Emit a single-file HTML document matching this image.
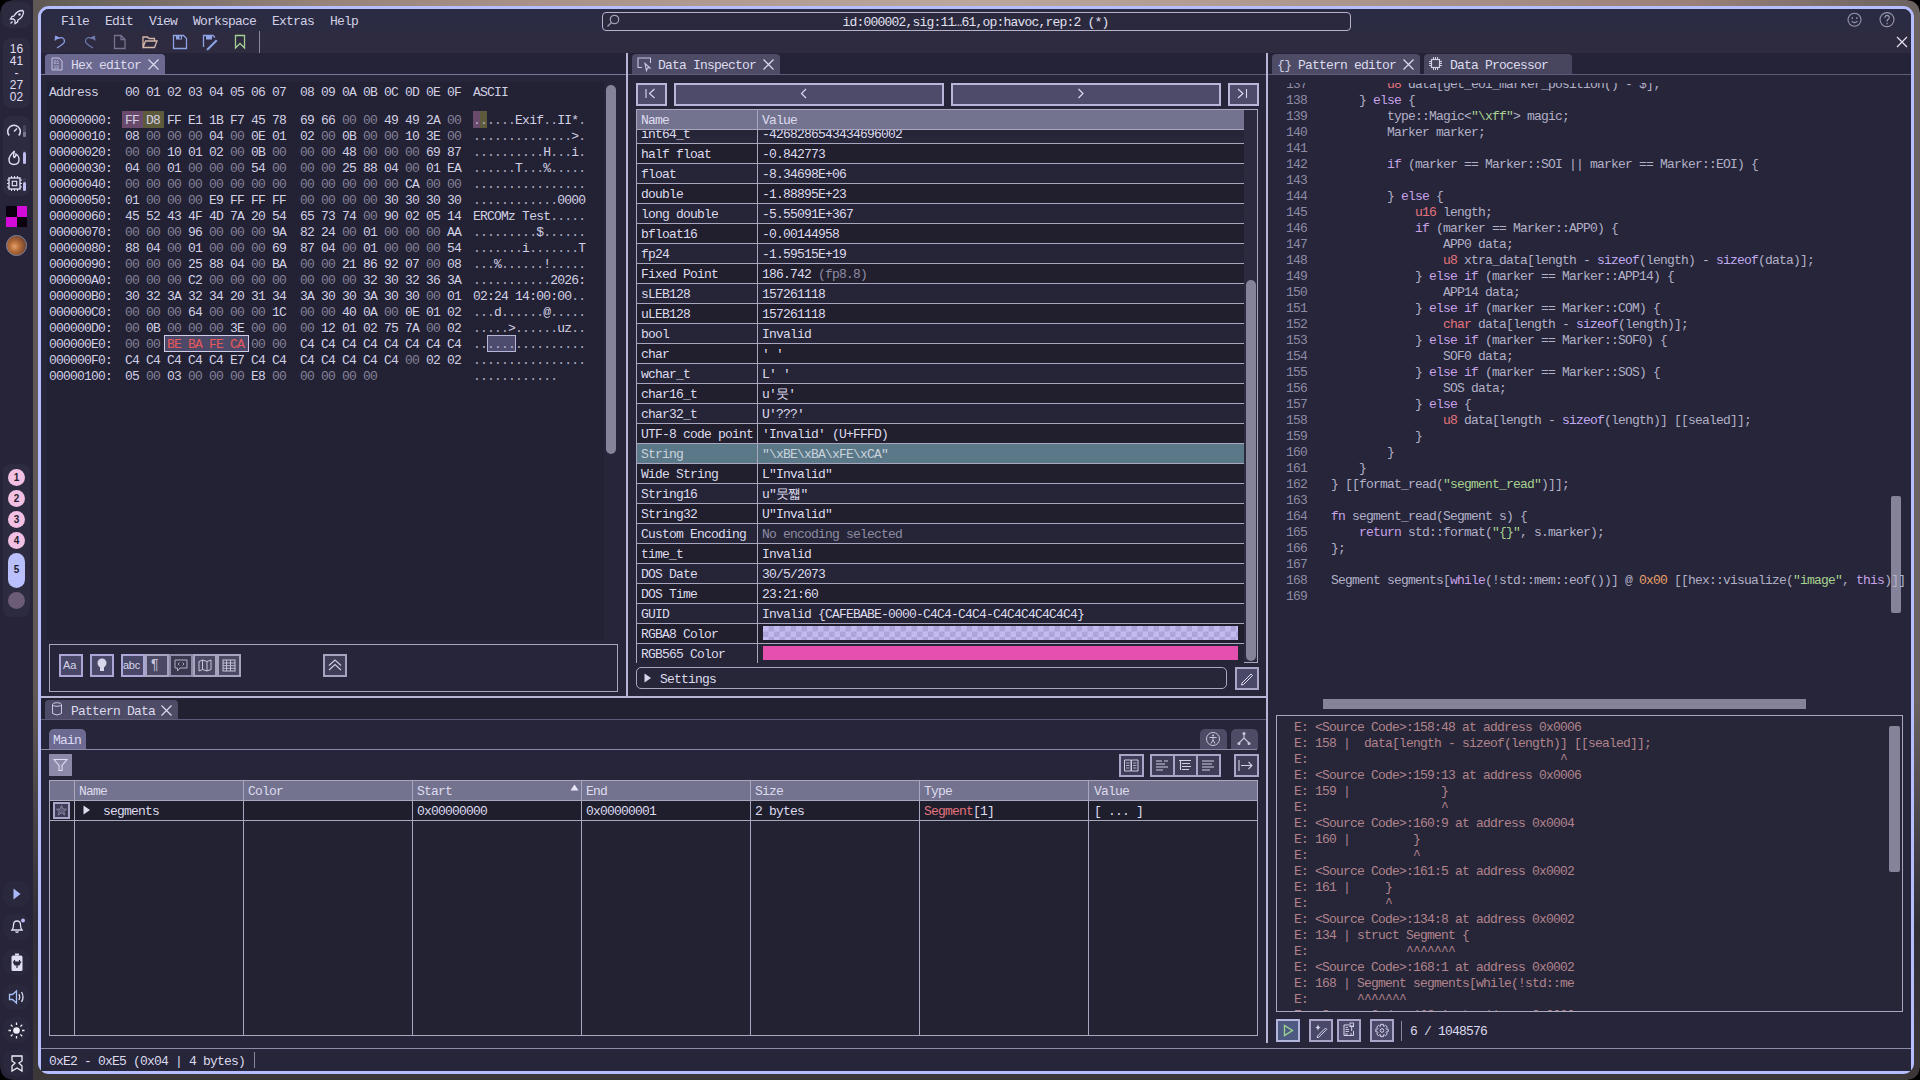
<!DOCTYPE html><html><head><meta charset="utf-8"><style>
*{margin:0;padding:0;box-sizing:border-box}
html,body{width:1920px;height:1080px;overflow:hidden;background:#272438}
body{position:relative;font-family:"Liberation Mono",monospace}
div{position:absolute}
.t{white-space:pre;font-size:13px;line-height:16px;letter-spacing:-0.801px;font-family:"Liberation Mono",monospace}
svg{position:absolute;overflow:visible}
</style></head><body>
<div style="left:26px;top:0;width:1894px;height:1080px;background:linear-gradient(90deg,#5e5652 0%,#6e6660 4%,#958279 15%,#a89088 26%,#bba79e 50%,#a89088 75%,#9a8078 88%,#6a6260 100%)"></div>
<div style="left:26px;top:700px;width:1894px;height:380px;background:linear-gradient(180deg,rgba(40,38,48,0) 0%,#2f2d36 60%,#3c3738 100%)"></div>
<div style="left:0;top:0;width:33px;height:1080px;background:#27243a"></div>
<div style="left:38px;top:6px;width:1876px;height:1068px;border:3px solid #b4befe;border-radius:11px;background:#262539;overflow:hidden" id="win"></div>
<div style="left:41px;top:9px;width:1870px;height:44px;background:linear-gradient(180deg,#2a2b43 0%,#2b2b43 50%,#2e2a40 51%,#2e2a40 100%);border-radius:8px 8px 0 0"></div>
<div style="left:41px;top:53px;width:1870px;height:21px;background:#242337"></div>
<div class="t" style="left:61px;top:14.1px;color:#d2d0e6;">File</div>
<div class="t" style="left:105px;top:14.1px;color:#d2d0e6;">Edit</div>
<div class="t" style="left:149px;top:14.1px;color:#d2d0e6;">View</div>
<div class="t" style="left:193px;top:14.1px;color:#d2d0e6;">Workspace</div>
<div class="t" style="left:272px;top:14.1px;color:#d2d0e6;">Extras</div>
<div class="t" style="left:330px;top:14.1px;color:#d2d0e6;">Help</div>
<div style="left:602px;top:12px;width:749px;height:19px;border:1.5px solid #b5b3ca;border-radius:4px;background:#2a293e"></div>
<svg style="left:606px;top:14px" width="14" height="14"><circle cx="8.5" cy="5.5" r="4.2" fill="none" stroke="#a09eb6" stroke-width="1.3"/><line x1="5.5" y1="8.5" x2="1.5" y2="12.5" stroke="#a09eb6" stroke-width="1.3"/></svg>
<div class="t" style="left:842.5px;top:14.6px;color:#e2e0f0;">id:000002,sig:11…61,op:havoc,rep:2 (*)</div>
<svg style="left:1846px;top:12px" width="18" height="16"><circle cx="8.5" cy="7.8" r="6.5" fill="none" stroke="#9896ad" stroke-width="1.1"/><rect x="5.5" y="5.3" width="1.5" height="1.5" fill="#9896ad"/><rect x="10" y="5.3" width="1.5" height="1.5" fill="#9896ad"/><path d="M5.6 9.2 Q8.5 12 11.4 9.2" fill="none" stroke="#9896ad" stroke-width="1.1"/></svg>
<svg style="left:1879px;top:12px" width="18" height="16"><circle cx="8" cy="7.6" r="7" fill="none" stroke="#9896ad" stroke-width="1.1"/><path d="M5.9 5.8 Q6 3.4 8.2 3.4 Q10.4 3.5 10.3 5.5 Q10.2 7 8.3 8 L8.1 9.6" fill="none" stroke="#9896ad" stroke-width="1.2"/><rect x="7.6" y="11" width="1.2" height="1.2" fill="#9896ad"/></svg>
<svg style="left:1896px;top:36px" width="12" height="12"><path d="M1 1 L11 11 M11 1 L1 11" stroke="#e6e4f4" stroke-width="1.2"/></svg>
<svg style="left:54px;top:35px" width="12" height="14"><path d="M3.5 3.5 Q10.5 1 10.5 6.5 Q10.5 8.5 3 13" fill="none" stroke="#8d9fe6" stroke-width="1.3"/><path d="M1 5.5 L1.5 1 L5.5 3" fill="#8d9fe6" stroke="#8d9fe6" stroke-width="1"/></svg>
<svg style="left:84px;top:35px" width="12" height="14"><path d="M8.5 3.5 Q1.5 1 1.5 6.5 Q1.5 8.5 9 13" fill="none" stroke="#6e79ad" stroke-width="1.3"/><path d="M11 5.5 L10.5 1 L6.5 3" fill="#6e79ad" stroke="#6e79ad" stroke-width="1"/></svg>
<svg style="left:113px;top:34px" width="14" height="16"><path d="M1.5 1.5 H8 L12 5.5 V14.5 H1.5 Z M8 1.5 V5.5 H12" fill="none" stroke="#76728d" stroke-width="1.3"/></svg>
<svg style="left:142px;top:35px" width="16" height="14"><path d="M1 12.5 V2 H5.5 L7 3.5 H12.5 V5.5 M1 12.5 L3.5 6 H15 L12.5 12.5 Z" fill="none" stroke="#d6b9aa" stroke-width="1.3"/></svg>
<svg style="left:172px;top:34px" width="16" height="16"><path d="M1.5 1.5 H11.5 L14.5 4.5 V14.5 H1.5 Z" fill="none" stroke="#8ea3e4" stroke-width="1.3"/><rect x="4" y="1.5" width="6" height="4" fill="#8ea3e4"/><rect x="7.5" y="2.3" width="1.4" height="2.4" fill="#2c2a42"/></svg>
<svg style="left:202px;top:34px" width="16" height="16"><path d="M1.5 13 V1.5 H11 L13 3.5" fill="none" stroke="#8ea3e4" stroke-width="1.3"/><rect x="4" y="1.5" width="6" height="4" fill="#8ea3e4"/><path d="M5 14.5 L14 5.5 L15.5 7 L6.5 16 L4.5 16.5 Z" fill="#8ea3e4"/></svg>
<svg style="left:234px;top:34px" width="12" height="16"><path d="M1.5 1.5 H10.5 V14 L6 9.5 L1.5 14 Z" fill="none" stroke="#a3d095" stroke-width="1.3"/></svg>
<div style="left:259px;top:31px;width:1px;height:22px;background:#8a88a0"></div>
<div style="left:626px;top:53px;width:2px;height:645px;background:#b7b5d6"></div>
<div style="left:1266px;top:53px;width:2px;height:990px;background:#b7b5d6"></div>
<div style="left:41px;top:696px;width:1225px;height:2px;background:#b7b5d6"></div>
<div style="left:41px;top:74px;width:585px;height:1px;background:#77759a"></div>
<div style="left:628px;top:74px;width:638px;height:1px;background:#5d5b78"></div>
<div style="left:1268px;top:74px;width:643px;height:1px;background:#5d5b78"></div>
<div style="left:45px;top:54px;width:120px;height:20px;background:#6b6990;border-radius:4px 4px 0 0"></div>
<svg style="left:51px;top:57px" width="12" height="14"><path d="M1 1 H8 L11 4 V13 H1 Z" fill="none" stroke="#c8c6e0" stroke-width="1"/><text x="2.5" y="6.5" font-size="4.5" fill="#c8c6e0" font-family="Liberation Mono">01</text><text x="2.5" y="11.5" font-size="4.5" fill="#c8c6e0" font-family="Liberation Mono">10</text></svg>
<div class="t" style="left:71px;top:58.1px;color:#dddbee;">Hex editor</div>
<svg style="left:148px;top:59px" width="11" height="11"><path d="M0.5 0.5 L10.5 10.5 M10.5 0.5 L0.5 10.5" stroke="#dcdaee" stroke-width="1.2"/></svg>
<div style="left:632px;top:54px;width:148px;height:20px;background:#4d4b66;border-radius:4px 4px 0 0"></div>
<svg style="left:637px;top:57px" width="15" height="14"><path d="M5 10.5 H1 V1 H13.5 V6" fill="none" stroke="#c8c6e0" stroke-width="1.1"/><path d="M8 6.5 L13 11 L10.5 11 L9.5 13.5 Z" fill="none" stroke="#c8c6e0" stroke-width="1.1"/></svg>
<div class="t" style="left:658px;top:58.1px;color:#dddbee;">Data Inspector</div>
<svg style="left:763px;top:59px" width="11" height="11"><path d="M0.5 0.5 L10.5 10.5 M10.5 0.5 L0.5 10.5" stroke="#dcdaee" stroke-width="1.2"/></svg>
<div style="left:1272px;top:54px;width:148px;height:20px;background:#4d4b66;border-radius:4px 4px 0 0"></div>
<svg style="left:1277px;top:56px" width="14" height="16"></svg>
<div class="t" style="left:1298px;top:58.1px;color:#dddbee;">Pattern editor</div>
<svg style="left:1403px;top:59px" width="11" height="11"><path d="M0.5 0.5 L10.5 10.5 M10.5 0.5 L0.5 10.5" stroke="#dcdaee" stroke-width="1.2"/></svg>
<div class="t" style="left:1277px;top:58.1px;color:#d0cee4;letter-spacing:-0.5px">{}</div>
<div style="left:1424px;top:54px;width:148px;height:20px;background:#48465f;border-radius:4px 4px 0 0"></div>
<svg style="left:1429px;top:57px" width="13" height="13"><rect x="2.5" y="2.5" width="8" height="8" fill="none" stroke="#d0cee4" stroke-width="1.2"/><path d="M4.5 0 V2.5 M6.5 0 V2.5 M8.5 0 V2.5 M4.5 10.5 V13 M6.5 10.5 V13 M8.5 10.5 V13 M0 4.5 H2.5 M0 6.5 H2.5 M0 8.5 H2.5 M10.5 4.5 H13 M10.5 6.5 H13 M10.5 8.5 H13" stroke="#d0cee4" stroke-width="1"/></svg>
<div class="t" style="left:1450px;top:58.1px;color:#dddbee;">Data Processor</div>
<div style="left:41px;top:75px;width:585px;height:621px;background:#262539"></div>
<div style="left:47px;top:82px;width:557px;height:558px;background:#232234"></div>
<div class="t" style="left:49px;top:85.1px;color:#d2d0e4;">Address</div>
<div class="t" style="left:125px;top:85.1px;color:#d2d0e4;">00</div>
<div class="t" style="left:146px;top:85.1px;color:#d2d0e4;">01</div>
<div class="t" style="left:167px;top:85.1px;color:#d2d0e4;">02</div>
<div class="t" style="left:188px;top:85.1px;color:#d2d0e4;">03</div>
<div class="t" style="left:209px;top:85.1px;color:#d2d0e4;">04</div>
<div class="t" style="left:230px;top:85.1px;color:#d2d0e4;">05</div>
<div class="t" style="left:251px;top:85.1px;color:#d2d0e4;">06</div>
<div class="t" style="left:272px;top:85.1px;color:#d2d0e4;">07</div>
<div class="t" style="left:300px;top:85.1px;color:#d2d0e4;">08</div>
<div class="t" style="left:321px;top:85.1px;color:#d2d0e4;">09</div>
<div class="t" style="left:342px;top:85.1px;color:#d2d0e4;">0A</div>
<div class="t" style="left:363px;top:85.1px;color:#d2d0e4;">0B</div>
<div class="t" style="left:384px;top:85.1px;color:#d2d0e4;">0C</div>
<div class="t" style="left:405px;top:85.1px;color:#d2d0e4;">0D</div>
<div class="t" style="left:426px;top:85.1px;color:#d2d0e4;">0E</div>
<div class="t" style="left:447px;top:85.1px;color:#d2d0e4;">0F</div>
<div class="t" style="left:473px;top:85.1px;color:#d2d0e4;">ASCII</div>
<div style="left:122px;top:111px;width:21px;height:17px;background:#6a4a6c"></div>
<div style="left:143px;top:111px;width:21px;height:17px;background:#5e5a3c"></div>
<div style="left:473px;top:111px;width:7px;height:17px;background:#6a4a6c"></div>
<div style="left:480px;top:111px;width:7px;height:17px;background:#5e5a3c"></div>
<div style="left:164px;top:335px;width:85px;height:17px;background:#4b4868;border:1px solid #d2cfea"></div>
<div style="left:487px;top:335px;width:29px;height:17px;background:#4e4c6e;border:1px solid #b8b6d8"></div>
<div class="t" style="left:49px;top:113.1px;color:#d2d0e4;">00000000:</div>
<div class="t" style="left:125px;top:113.1px;color:#d2d0e4;">FF</div>
<div class="t" style="left:146px;top:113.1px;color:#d2d0e4;">D8</div>
<div class="t" style="left:167px;top:113.1px;color:#d2d0e4;">FF</div>
<div class="t" style="left:188px;top:113.1px;color:#d2d0e4;">E1</div>
<div class="t" style="left:209px;top:113.1px;color:#d2d0e4;">1B</div>
<div class="t" style="left:230px;top:113.1px;color:#d2d0e4;">F7</div>
<div class="t" style="left:251px;top:113.1px;color:#d2d0e4;">45</div>
<div class="t" style="left:272px;top:113.1px;color:#d2d0e4;">78</div>
<div class="t" style="left:300px;top:113.1px;color:#d2d0e4;">69</div>
<div class="t" style="left:321px;top:113.1px;color:#d2d0e4;">66</div>
<div class="t" style="left:342px;top:113.1px;color:#858399;">00</div>
<div class="t" style="left:363px;top:113.1px;color:#858399;">00</div>
<div class="t" style="left:384px;top:113.1px;color:#d2d0e4;">49</div>
<div class="t" style="left:405px;top:113.1px;color:#d2d0e4;">49</div>
<div class="t" style="left:426px;top:113.1px;color:#d2d0e4;">2A</div>
<div class="t" style="left:447px;top:113.1px;color:#858399;">00</div>
<div class="t" style="left:473px;top:113.1px;color:#d2d0e4;"><span style="color:#b3b1c6">.</span><span style="color:#b3b1c6">.</span><span style="color:#b3b1c6">.</span><span style="color:#b3b1c6">.</span><span style="color:#b3b1c6">.</span><span style="color:#b3b1c6">.</span><span style="color:#d2d0e4">E</span><span style="color:#d2d0e4">x</span><span style="color:#d2d0e4">i</span><span style="color:#d2d0e4">f</span><span style="color:#b3b1c6">.</span><span style="color:#b3b1c6">.</span><span style="color:#d2d0e4">I</span><span style="color:#d2d0e4">I</span><span style="color:#d2d0e4">*</span><span style="color:#b3b1c6">.</span></div>
<div class="t" style="left:49px;top:129.1px;color:#d2d0e4;">00000010:</div>
<div class="t" style="left:125px;top:129.1px;color:#d2d0e4;">08</div>
<div class="t" style="left:146px;top:129.1px;color:#858399;">00</div>
<div class="t" style="left:167px;top:129.1px;color:#858399;">00</div>
<div class="t" style="left:188px;top:129.1px;color:#858399;">00</div>
<div class="t" style="left:209px;top:129.1px;color:#d2d0e4;">04</div>
<div class="t" style="left:230px;top:129.1px;color:#858399;">00</div>
<div class="t" style="left:251px;top:129.1px;color:#d2d0e4;">0E</div>
<div class="t" style="left:272px;top:129.1px;color:#d2d0e4;">01</div>
<div class="t" style="left:300px;top:129.1px;color:#d2d0e4;">02</div>
<div class="t" style="left:321px;top:129.1px;color:#858399;">00</div>
<div class="t" style="left:342px;top:129.1px;color:#d2d0e4;">0B</div>
<div class="t" style="left:363px;top:129.1px;color:#858399;">00</div>
<div class="t" style="left:384px;top:129.1px;color:#858399;">00</div>
<div class="t" style="left:405px;top:129.1px;color:#d2d0e4;">10</div>
<div class="t" style="left:426px;top:129.1px;color:#d2d0e4;">3E</div>
<div class="t" style="left:447px;top:129.1px;color:#858399;">00</div>
<div class="t" style="left:473px;top:129.1px;color:#d2d0e4;"><span style="color:#b3b1c6">.</span><span style="color:#b3b1c6">.</span><span style="color:#b3b1c6">.</span><span style="color:#b3b1c6">.</span><span style="color:#b3b1c6">.</span><span style="color:#b3b1c6">.</span><span style="color:#b3b1c6">.</span><span style="color:#b3b1c6">.</span><span style="color:#b3b1c6">.</span><span style="color:#b3b1c6">.</span><span style="color:#b3b1c6">.</span><span style="color:#b3b1c6">.</span><span style="color:#b3b1c6">.</span><span style="color:#b3b1c6">.</span><span style="color:#d2d0e4">&gt;</span><span style="color:#b3b1c6">.</span></div>
<div class="t" style="left:49px;top:145.1px;color:#d2d0e4;">00000020:</div>
<div class="t" style="left:125px;top:145.1px;color:#858399;">00</div>
<div class="t" style="left:146px;top:145.1px;color:#858399;">00</div>
<div class="t" style="left:167px;top:145.1px;color:#d2d0e4;">10</div>
<div class="t" style="left:188px;top:145.1px;color:#d2d0e4;">01</div>
<div class="t" style="left:209px;top:145.1px;color:#d2d0e4;">02</div>
<div class="t" style="left:230px;top:145.1px;color:#858399;">00</div>
<div class="t" style="left:251px;top:145.1px;color:#d2d0e4;">0B</div>
<div class="t" style="left:272px;top:145.1px;color:#858399;">00</div>
<div class="t" style="left:300px;top:145.1px;color:#858399;">00</div>
<div class="t" style="left:321px;top:145.1px;color:#858399;">00</div>
<div class="t" style="left:342px;top:145.1px;color:#d2d0e4;">48</div>
<div class="t" style="left:363px;top:145.1px;color:#858399;">00</div>
<div class="t" style="left:384px;top:145.1px;color:#858399;">00</div>
<div class="t" style="left:405px;top:145.1px;color:#858399;">00</div>
<div class="t" style="left:426px;top:145.1px;color:#d2d0e4;">69</div>
<div class="t" style="left:447px;top:145.1px;color:#d2d0e4;">87</div>
<div class="t" style="left:473px;top:145.1px;color:#d2d0e4;"><span style="color:#b3b1c6">.</span><span style="color:#b3b1c6">.</span><span style="color:#b3b1c6">.</span><span style="color:#b3b1c6">.</span><span style="color:#b3b1c6">.</span><span style="color:#b3b1c6">.</span><span style="color:#b3b1c6">.</span><span style="color:#b3b1c6">.</span><span style="color:#b3b1c6">.</span><span style="color:#b3b1c6">.</span><span style="color:#d2d0e4">H</span><span style="color:#b3b1c6">.</span><span style="color:#b3b1c6">.</span><span style="color:#b3b1c6">.</span><span style="color:#d2d0e4">i</span><span style="color:#b3b1c6">.</span></div>
<div class="t" style="left:49px;top:161.1px;color:#d2d0e4;">00000030:</div>
<div class="t" style="left:125px;top:161.1px;color:#d2d0e4;">04</div>
<div class="t" style="left:146px;top:161.1px;color:#858399;">00</div>
<div class="t" style="left:167px;top:161.1px;color:#d2d0e4;">01</div>
<div class="t" style="left:188px;top:161.1px;color:#858399;">00</div>
<div class="t" style="left:209px;top:161.1px;color:#858399;">00</div>
<div class="t" style="left:230px;top:161.1px;color:#858399;">00</div>
<div class="t" style="left:251px;top:161.1px;color:#d2d0e4;">54</div>
<div class="t" style="left:272px;top:161.1px;color:#858399;">00</div>
<div class="t" style="left:300px;top:161.1px;color:#858399;">00</div>
<div class="t" style="left:321px;top:161.1px;color:#858399;">00</div>
<div class="t" style="left:342px;top:161.1px;color:#d2d0e4;">25</div>
<div class="t" style="left:363px;top:161.1px;color:#d2d0e4;">88</div>
<div class="t" style="left:384px;top:161.1px;color:#d2d0e4;">04</div>
<div class="t" style="left:405px;top:161.1px;color:#858399;">00</div>
<div class="t" style="left:426px;top:161.1px;color:#d2d0e4;">01</div>
<div class="t" style="left:447px;top:161.1px;color:#d2d0e4;">EA</div>
<div class="t" style="left:473px;top:161.1px;color:#d2d0e4;"><span style="color:#b3b1c6">.</span><span style="color:#b3b1c6">.</span><span style="color:#b3b1c6">.</span><span style="color:#b3b1c6">.</span><span style="color:#b3b1c6">.</span><span style="color:#b3b1c6">.</span><span style="color:#d2d0e4">T</span><span style="color:#b3b1c6">.</span><span style="color:#b3b1c6">.</span><span style="color:#b3b1c6">.</span><span style="color:#d2d0e4">%</span><span style="color:#b3b1c6">.</span><span style="color:#b3b1c6">.</span><span style="color:#b3b1c6">.</span><span style="color:#b3b1c6">.</span><span style="color:#b3b1c6">.</span></div>
<div class="t" style="left:49px;top:177.1px;color:#d2d0e4;">00000040:</div>
<div class="t" style="left:125px;top:177.1px;color:#858399;">00</div>
<div class="t" style="left:146px;top:177.1px;color:#858399;">00</div>
<div class="t" style="left:167px;top:177.1px;color:#858399;">00</div>
<div class="t" style="left:188px;top:177.1px;color:#858399;">00</div>
<div class="t" style="left:209px;top:177.1px;color:#858399;">00</div>
<div class="t" style="left:230px;top:177.1px;color:#858399;">00</div>
<div class="t" style="left:251px;top:177.1px;color:#858399;">00</div>
<div class="t" style="left:272px;top:177.1px;color:#858399;">00</div>
<div class="t" style="left:300px;top:177.1px;color:#858399;">00</div>
<div class="t" style="left:321px;top:177.1px;color:#858399;">00</div>
<div class="t" style="left:342px;top:177.1px;color:#858399;">00</div>
<div class="t" style="left:363px;top:177.1px;color:#858399;">00</div>
<div class="t" style="left:384px;top:177.1px;color:#858399;">00</div>
<div class="t" style="left:405px;top:177.1px;color:#d2d0e4;">CA</div>
<div class="t" style="left:426px;top:177.1px;color:#858399;">00</div>
<div class="t" style="left:447px;top:177.1px;color:#858399;">00</div>
<div class="t" style="left:473px;top:177.1px;color:#d2d0e4;"><span style="color:#b3b1c6">.</span><span style="color:#b3b1c6">.</span><span style="color:#b3b1c6">.</span><span style="color:#b3b1c6">.</span><span style="color:#b3b1c6">.</span><span style="color:#b3b1c6">.</span><span style="color:#b3b1c6">.</span><span style="color:#b3b1c6">.</span><span style="color:#b3b1c6">.</span><span style="color:#b3b1c6">.</span><span style="color:#b3b1c6">.</span><span style="color:#b3b1c6">.</span><span style="color:#b3b1c6">.</span><span style="color:#b3b1c6">.</span><span style="color:#b3b1c6">.</span><span style="color:#b3b1c6">.</span></div>
<div class="t" style="left:49px;top:193.1px;color:#d2d0e4;">00000050:</div>
<div class="t" style="left:125px;top:193.1px;color:#d2d0e4;">01</div>
<div class="t" style="left:146px;top:193.1px;color:#858399;">00</div>
<div class="t" style="left:167px;top:193.1px;color:#858399;">00</div>
<div class="t" style="left:188px;top:193.1px;color:#858399;">00</div>
<div class="t" style="left:209px;top:193.1px;color:#d2d0e4;">E9</div>
<div class="t" style="left:230px;top:193.1px;color:#d2d0e4;">FF</div>
<div class="t" style="left:251px;top:193.1px;color:#d2d0e4;">FF</div>
<div class="t" style="left:272px;top:193.1px;color:#d2d0e4;">FF</div>
<div class="t" style="left:300px;top:193.1px;color:#858399;">00</div>
<div class="t" style="left:321px;top:193.1px;color:#858399;">00</div>
<div class="t" style="left:342px;top:193.1px;color:#858399;">00</div>
<div class="t" style="left:363px;top:193.1px;color:#858399;">00</div>
<div class="t" style="left:384px;top:193.1px;color:#d2d0e4;">30</div>
<div class="t" style="left:405px;top:193.1px;color:#d2d0e4;">30</div>
<div class="t" style="left:426px;top:193.1px;color:#d2d0e4;">30</div>
<div class="t" style="left:447px;top:193.1px;color:#d2d0e4;">30</div>
<div class="t" style="left:473px;top:193.1px;color:#d2d0e4;"><span style="color:#b3b1c6">.</span><span style="color:#b3b1c6">.</span><span style="color:#b3b1c6">.</span><span style="color:#b3b1c6">.</span><span style="color:#b3b1c6">.</span><span style="color:#b3b1c6">.</span><span style="color:#b3b1c6">.</span><span style="color:#b3b1c6">.</span><span style="color:#b3b1c6">.</span><span style="color:#b3b1c6">.</span><span style="color:#b3b1c6">.</span><span style="color:#b3b1c6">.</span><span style="color:#d2d0e4">0</span><span style="color:#d2d0e4">0</span><span style="color:#d2d0e4">0</span><span style="color:#d2d0e4">0</span></div>
<div class="t" style="left:49px;top:209.1px;color:#d2d0e4;">00000060:</div>
<div class="t" style="left:125px;top:209.1px;color:#d2d0e4;">45</div>
<div class="t" style="left:146px;top:209.1px;color:#d2d0e4;">52</div>
<div class="t" style="left:167px;top:209.1px;color:#d2d0e4;">43</div>
<div class="t" style="left:188px;top:209.1px;color:#d2d0e4;">4F</div>
<div class="t" style="left:209px;top:209.1px;color:#d2d0e4;">4D</div>
<div class="t" style="left:230px;top:209.1px;color:#d2d0e4;">7A</div>
<div class="t" style="left:251px;top:209.1px;color:#d2d0e4;">20</div>
<div class="t" style="left:272px;top:209.1px;color:#d2d0e4;">54</div>
<div class="t" style="left:300px;top:209.1px;color:#d2d0e4;">65</div>
<div class="t" style="left:321px;top:209.1px;color:#d2d0e4;">73</div>
<div class="t" style="left:342px;top:209.1px;color:#d2d0e4;">74</div>
<div class="t" style="left:363px;top:209.1px;color:#858399;">00</div>
<div class="t" style="left:384px;top:209.1px;color:#d2d0e4;">90</div>
<div class="t" style="left:405px;top:209.1px;color:#d2d0e4;">02</div>
<div class="t" style="left:426px;top:209.1px;color:#d2d0e4;">05</div>
<div class="t" style="left:447px;top:209.1px;color:#d2d0e4;">14</div>
<div class="t" style="left:473px;top:209.1px;color:#d2d0e4;"><span style="color:#d2d0e4">E</span><span style="color:#d2d0e4">R</span><span style="color:#d2d0e4">C</span><span style="color:#d2d0e4">O</span><span style="color:#d2d0e4">M</span><span style="color:#d2d0e4">z</span><span style="color:#d2d0e4"> </span><span style="color:#d2d0e4">T</span><span style="color:#d2d0e4">e</span><span style="color:#d2d0e4">s</span><span style="color:#d2d0e4">t</span><span style="color:#b3b1c6">.</span><span style="color:#b3b1c6">.</span><span style="color:#b3b1c6">.</span><span style="color:#b3b1c6">.</span><span style="color:#b3b1c6">.</span></div>
<div class="t" style="left:49px;top:225.1px;color:#d2d0e4;">00000070:</div>
<div class="t" style="left:125px;top:225.1px;color:#858399;">00</div>
<div class="t" style="left:146px;top:225.1px;color:#858399;">00</div>
<div class="t" style="left:167px;top:225.1px;color:#858399;">00</div>
<div class="t" style="left:188px;top:225.1px;color:#d2d0e4;">96</div>
<div class="t" style="left:209px;top:225.1px;color:#858399;">00</div>
<div class="t" style="left:230px;top:225.1px;color:#858399;">00</div>
<div class="t" style="left:251px;top:225.1px;color:#858399;">00</div>
<div class="t" style="left:272px;top:225.1px;color:#d2d0e4;">9A</div>
<div class="t" style="left:300px;top:225.1px;color:#d2d0e4;">82</div>
<div class="t" style="left:321px;top:225.1px;color:#d2d0e4;">24</div>
<div class="t" style="left:342px;top:225.1px;color:#858399;">00</div>
<div class="t" style="left:363px;top:225.1px;color:#d2d0e4;">01</div>
<div class="t" style="left:384px;top:225.1px;color:#858399;">00</div>
<div class="t" style="left:405px;top:225.1px;color:#858399;">00</div>
<div class="t" style="left:426px;top:225.1px;color:#858399;">00</div>
<div class="t" style="left:447px;top:225.1px;color:#d2d0e4;">AA</div>
<div class="t" style="left:473px;top:225.1px;color:#d2d0e4;"><span style="color:#b3b1c6">.</span><span style="color:#b3b1c6">.</span><span style="color:#b3b1c6">.</span><span style="color:#b3b1c6">.</span><span style="color:#b3b1c6">.</span><span style="color:#b3b1c6">.</span><span style="color:#b3b1c6">.</span><span style="color:#b3b1c6">.</span><span style="color:#b3b1c6">.</span><span style="color:#d2d0e4">$</span><span style="color:#b3b1c6">.</span><span style="color:#b3b1c6">.</span><span style="color:#b3b1c6">.</span><span style="color:#b3b1c6">.</span><span style="color:#b3b1c6">.</span><span style="color:#b3b1c6">.</span></div>
<div class="t" style="left:49px;top:241.1px;color:#d2d0e4;">00000080:</div>
<div class="t" style="left:125px;top:241.1px;color:#d2d0e4;">88</div>
<div class="t" style="left:146px;top:241.1px;color:#d2d0e4;">04</div>
<div class="t" style="left:167px;top:241.1px;color:#858399;">00</div>
<div class="t" style="left:188px;top:241.1px;color:#d2d0e4;">01</div>
<div class="t" style="left:209px;top:241.1px;color:#858399;">00</div>
<div class="t" style="left:230px;top:241.1px;color:#858399;">00</div>
<div class="t" style="left:251px;top:241.1px;color:#858399;">00</div>
<div class="t" style="left:272px;top:241.1px;color:#d2d0e4;">69</div>
<div class="t" style="left:300px;top:241.1px;color:#d2d0e4;">87</div>
<div class="t" style="left:321px;top:241.1px;color:#d2d0e4;">04</div>
<div class="t" style="left:342px;top:241.1px;color:#858399;">00</div>
<div class="t" style="left:363px;top:241.1px;color:#d2d0e4;">01</div>
<div class="t" style="left:384px;top:241.1px;color:#858399;">00</div>
<div class="t" style="left:405px;top:241.1px;color:#858399;">00</div>
<div class="t" style="left:426px;top:241.1px;color:#858399;">00</div>
<div class="t" style="left:447px;top:241.1px;color:#d2d0e4;">54</div>
<div class="t" style="left:473px;top:241.1px;color:#d2d0e4;"><span style="color:#b3b1c6">.</span><span style="color:#b3b1c6">.</span><span style="color:#b3b1c6">.</span><span style="color:#b3b1c6">.</span><span style="color:#b3b1c6">.</span><span style="color:#b3b1c6">.</span><span style="color:#b3b1c6">.</span><span style="color:#d2d0e4">i</span><span style="color:#b3b1c6">.</span><span style="color:#b3b1c6">.</span><span style="color:#b3b1c6">.</span><span style="color:#b3b1c6">.</span><span style="color:#b3b1c6">.</span><span style="color:#b3b1c6">.</span><span style="color:#b3b1c6">.</span><span style="color:#d2d0e4">T</span></div>
<div class="t" style="left:49px;top:257.1px;color:#d2d0e4;">00000090:</div>
<div class="t" style="left:125px;top:257.1px;color:#858399;">00</div>
<div class="t" style="left:146px;top:257.1px;color:#858399;">00</div>
<div class="t" style="left:167px;top:257.1px;color:#858399;">00</div>
<div class="t" style="left:188px;top:257.1px;color:#d2d0e4;">25</div>
<div class="t" style="left:209px;top:257.1px;color:#d2d0e4;">88</div>
<div class="t" style="left:230px;top:257.1px;color:#d2d0e4;">04</div>
<div class="t" style="left:251px;top:257.1px;color:#858399;">00</div>
<div class="t" style="left:272px;top:257.1px;color:#d2d0e4;">BA</div>
<div class="t" style="left:300px;top:257.1px;color:#858399;">00</div>
<div class="t" style="left:321px;top:257.1px;color:#858399;">00</div>
<div class="t" style="left:342px;top:257.1px;color:#d2d0e4;">21</div>
<div class="t" style="left:363px;top:257.1px;color:#d2d0e4;">86</div>
<div class="t" style="left:384px;top:257.1px;color:#d2d0e4;">92</div>
<div class="t" style="left:405px;top:257.1px;color:#d2d0e4;">07</div>
<div class="t" style="left:426px;top:257.1px;color:#858399;">00</div>
<div class="t" style="left:447px;top:257.1px;color:#d2d0e4;">08</div>
<div class="t" style="left:473px;top:257.1px;color:#d2d0e4;"><span style="color:#b3b1c6">.</span><span style="color:#b3b1c6">.</span><span style="color:#b3b1c6">.</span><span style="color:#d2d0e4">%</span><span style="color:#b3b1c6">.</span><span style="color:#b3b1c6">.</span><span style="color:#b3b1c6">.</span><span style="color:#b3b1c6">.</span><span style="color:#b3b1c6">.</span><span style="color:#b3b1c6">.</span><span style="color:#d2d0e4">!</span><span style="color:#b3b1c6">.</span><span style="color:#b3b1c6">.</span><span style="color:#b3b1c6">.</span><span style="color:#b3b1c6">.</span><span style="color:#b3b1c6">.</span></div>
<div class="t" style="left:49px;top:273.1px;color:#d2d0e4;">000000A0:</div>
<div class="t" style="left:125px;top:273.1px;color:#858399;">00</div>
<div class="t" style="left:146px;top:273.1px;color:#858399;">00</div>
<div class="t" style="left:167px;top:273.1px;color:#858399;">00</div>
<div class="t" style="left:188px;top:273.1px;color:#d2d0e4;">C2</div>
<div class="t" style="left:209px;top:273.1px;color:#858399;">00</div>
<div class="t" style="left:230px;top:273.1px;color:#858399;">00</div>
<div class="t" style="left:251px;top:273.1px;color:#858399;">00</div>
<div class="t" style="left:272px;top:273.1px;color:#858399;">00</div>
<div class="t" style="left:300px;top:273.1px;color:#858399;">00</div>
<div class="t" style="left:321px;top:273.1px;color:#858399;">00</div>
<div class="t" style="left:342px;top:273.1px;color:#858399;">00</div>
<div class="t" style="left:363px;top:273.1px;color:#d2d0e4;">32</div>
<div class="t" style="left:384px;top:273.1px;color:#d2d0e4;">30</div>
<div class="t" style="left:405px;top:273.1px;color:#d2d0e4;">32</div>
<div class="t" style="left:426px;top:273.1px;color:#d2d0e4;">36</div>
<div class="t" style="left:447px;top:273.1px;color:#d2d0e4;">3A</div>
<div class="t" style="left:473px;top:273.1px;color:#d2d0e4;"><span style="color:#b3b1c6">.</span><span style="color:#b3b1c6">.</span><span style="color:#b3b1c6">.</span><span style="color:#b3b1c6">.</span><span style="color:#b3b1c6">.</span><span style="color:#b3b1c6">.</span><span style="color:#b3b1c6">.</span><span style="color:#b3b1c6">.</span><span style="color:#b3b1c6">.</span><span style="color:#b3b1c6">.</span><span style="color:#b3b1c6">.</span><span style="color:#d2d0e4">2</span><span style="color:#d2d0e4">0</span><span style="color:#d2d0e4">2</span><span style="color:#d2d0e4">6</span><span style="color:#d2d0e4">:</span></div>
<div class="t" style="left:49px;top:289.1px;color:#d2d0e4;">000000B0:</div>
<div class="t" style="left:125px;top:289.1px;color:#d2d0e4;">30</div>
<div class="t" style="left:146px;top:289.1px;color:#d2d0e4;">32</div>
<div class="t" style="left:167px;top:289.1px;color:#d2d0e4;">3A</div>
<div class="t" style="left:188px;top:289.1px;color:#d2d0e4;">32</div>
<div class="t" style="left:209px;top:289.1px;color:#d2d0e4;">34</div>
<div class="t" style="left:230px;top:289.1px;color:#d2d0e4;">20</div>
<div class="t" style="left:251px;top:289.1px;color:#d2d0e4;">31</div>
<div class="t" style="left:272px;top:289.1px;color:#d2d0e4;">34</div>
<div class="t" style="left:300px;top:289.1px;color:#d2d0e4;">3A</div>
<div class="t" style="left:321px;top:289.1px;color:#d2d0e4;">30</div>
<div class="t" style="left:342px;top:289.1px;color:#d2d0e4;">30</div>
<div class="t" style="left:363px;top:289.1px;color:#d2d0e4;">3A</div>
<div class="t" style="left:384px;top:289.1px;color:#d2d0e4;">30</div>
<div class="t" style="left:405px;top:289.1px;color:#d2d0e4;">30</div>
<div class="t" style="left:426px;top:289.1px;color:#858399;">00</div>
<div class="t" style="left:447px;top:289.1px;color:#d2d0e4;">01</div>
<div class="t" style="left:473px;top:289.1px;color:#d2d0e4;"><span style="color:#d2d0e4">0</span><span style="color:#d2d0e4">2</span><span style="color:#d2d0e4">:</span><span style="color:#d2d0e4">2</span><span style="color:#d2d0e4">4</span><span style="color:#d2d0e4"> </span><span style="color:#d2d0e4">1</span><span style="color:#d2d0e4">4</span><span style="color:#d2d0e4">:</span><span style="color:#d2d0e4">0</span><span style="color:#d2d0e4">0</span><span style="color:#d2d0e4">:</span><span style="color:#d2d0e4">0</span><span style="color:#d2d0e4">0</span><span style="color:#b3b1c6">.</span><span style="color:#b3b1c6">.</span></div>
<div class="t" style="left:49px;top:305.1px;color:#d2d0e4;">000000C0:</div>
<div class="t" style="left:125px;top:305.1px;color:#858399;">00</div>
<div class="t" style="left:146px;top:305.1px;color:#858399;">00</div>
<div class="t" style="left:167px;top:305.1px;color:#858399;">00</div>
<div class="t" style="left:188px;top:305.1px;color:#d2d0e4;">64</div>
<div class="t" style="left:209px;top:305.1px;color:#858399;">00</div>
<div class="t" style="left:230px;top:305.1px;color:#858399;">00</div>
<div class="t" style="left:251px;top:305.1px;color:#858399;">00</div>
<div class="t" style="left:272px;top:305.1px;color:#d2d0e4;">1C</div>
<div class="t" style="left:300px;top:305.1px;color:#858399;">00</div>
<div class="t" style="left:321px;top:305.1px;color:#858399;">00</div>
<div class="t" style="left:342px;top:305.1px;color:#d2d0e4;">40</div>
<div class="t" style="left:363px;top:305.1px;color:#d2d0e4;">0A</div>
<div class="t" style="left:384px;top:305.1px;color:#858399;">00</div>
<div class="t" style="left:405px;top:305.1px;color:#d2d0e4;">0E</div>
<div class="t" style="left:426px;top:305.1px;color:#d2d0e4;">01</div>
<div class="t" style="left:447px;top:305.1px;color:#d2d0e4;">02</div>
<div class="t" style="left:473px;top:305.1px;color:#d2d0e4;"><span style="color:#b3b1c6">.</span><span style="color:#b3b1c6">.</span><span style="color:#b3b1c6">.</span><span style="color:#d2d0e4">d</span><span style="color:#b3b1c6">.</span><span style="color:#b3b1c6">.</span><span style="color:#b3b1c6">.</span><span style="color:#b3b1c6">.</span><span style="color:#b3b1c6">.</span><span style="color:#b3b1c6">.</span><span style="color:#d2d0e4">@</span><span style="color:#b3b1c6">.</span><span style="color:#b3b1c6">.</span><span style="color:#b3b1c6">.</span><span style="color:#b3b1c6">.</span><span style="color:#b3b1c6">.</span></div>
<div class="t" style="left:49px;top:321.1px;color:#d2d0e4;">000000D0:</div>
<div class="t" style="left:125px;top:321.1px;color:#858399;">00</div>
<div class="t" style="left:146px;top:321.1px;color:#d2d0e4;">0B</div>
<div class="t" style="left:167px;top:321.1px;color:#858399;">00</div>
<div class="t" style="left:188px;top:321.1px;color:#858399;">00</div>
<div class="t" style="left:209px;top:321.1px;color:#858399;">00</div>
<div class="t" style="left:230px;top:321.1px;color:#d2d0e4;">3E</div>
<div class="t" style="left:251px;top:321.1px;color:#858399;">00</div>
<div class="t" style="left:272px;top:321.1px;color:#858399;">00</div>
<div class="t" style="left:300px;top:321.1px;color:#858399;">00</div>
<div class="t" style="left:321px;top:321.1px;color:#d2d0e4;">12</div>
<div class="t" style="left:342px;top:321.1px;color:#d2d0e4;">01</div>
<div class="t" style="left:363px;top:321.1px;color:#d2d0e4;">02</div>
<div class="t" style="left:384px;top:321.1px;color:#d2d0e4;">75</div>
<div class="t" style="left:405px;top:321.1px;color:#d2d0e4;">7A</div>
<div class="t" style="left:426px;top:321.1px;color:#858399;">00</div>
<div class="t" style="left:447px;top:321.1px;color:#d2d0e4;">02</div>
<div class="t" style="left:473px;top:321.1px;color:#d2d0e4;"><span style="color:#b3b1c6">.</span><span style="color:#b3b1c6">.</span><span style="color:#b3b1c6">.</span><span style="color:#b3b1c6">.</span><span style="color:#b3b1c6">.</span><span style="color:#d2d0e4">&gt;</span><span style="color:#b3b1c6">.</span><span style="color:#b3b1c6">.</span><span style="color:#b3b1c6">.</span><span style="color:#b3b1c6">.</span><span style="color:#b3b1c6">.</span><span style="color:#b3b1c6">.</span><span style="color:#d2d0e4">u</span><span style="color:#d2d0e4">z</span><span style="color:#b3b1c6">.</span><span style="color:#b3b1c6">.</span></div>
<div class="t" style="left:49px;top:337.1px;color:#d2d0e4;">000000E0:</div>
<div class="t" style="left:125px;top:337.1px;color:#858399;">00</div>
<div class="t" style="left:146px;top:337.1px;color:#858399;">00</div>
<div class="t" style="left:167px;top:337.1px;color:#e8585a;">BE</div>
<div class="t" style="left:188px;top:337.1px;color:#e8585a;">BA</div>
<div class="t" style="left:209px;top:337.1px;color:#e8585a;">FE</div>
<div class="t" style="left:230px;top:337.1px;color:#e8585a;">CA</div>
<div class="t" style="left:251px;top:337.1px;color:#858399;">00</div>
<div class="t" style="left:272px;top:337.1px;color:#858399;">00</div>
<div class="t" style="left:300px;top:337.1px;color:#d2d0e4;">C4</div>
<div class="t" style="left:321px;top:337.1px;color:#d2d0e4;">C4</div>
<div class="t" style="left:342px;top:337.1px;color:#d2d0e4;">C4</div>
<div class="t" style="left:363px;top:337.1px;color:#d2d0e4;">C4</div>
<div class="t" style="left:384px;top:337.1px;color:#d2d0e4;">C4</div>
<div class="t" style="left:405px;top:337.1px;color:#d2d0e4;">C4</div>
<div class="t" style="left:426px;top:337.1px;color:#d2d0e4;">C4</div>
<div class="t" style="left:447px;top:337.1px;color:#d2d0e4;">C4</div>
<div class="t" style="left:473px;top:337.1px;color:#d2d0e4;"><span style="color:#b3b1c6">.</span><span style="color:#b3b1c6">.</span><span style="color:#b3b1c6">.</span><span style="color:#b3b1c6">.</span><span style="color:#b3b1c6">.</span><span style="color:#b3b1c6">.</span><span style="color:#b3b1c6">.</span><span style="color:#b3b1c6">.</span><span style="color:#b3b1c6">.</span><span style="color:#b3b1c6">.</span><span style="color:#b3b1c6">.</span><span style="color:#b3b1c6">.</span><span style="color:#b3b1c6">.</span><span style="color:#b3b1c6">.</span><span style="color:#b3b1c6">.</span><span style="color:#b3b1c6">.</span></div>
<div class="t" style="left:49px;top:353.1px;color:#d2d0e4;">000000F0:</div>
<div class="t" style="left:125px;top:353.1px;color:#d2d0e4;">C4</div>
<div class="t" style="left:146px;top:353.1px;color:#d2d0e4;">C4</div>
<div class="t" style="left:167px;top:353.1px;color:#d2d0e4;">C4</div>
<div class="t" style="left:188px;top:353.1px;color:#d2d0e4;">C4</div>
<div class="t" style="left:209px;top:353.1px;color:#d2d0e4;">C4</div>
<div class="t" style="left:230px;top:353.1px;color:#d2d0e4;">E7</div>
<div class="t" style="left:251px;top:353.1px;color:#d2d0e4;">C4</div>
<div class="t" style="left:272px;top:353.1px;color:#d2d0e4;">C4</div>
<div class="t" style="left:300px;top:353.1px;color:#d2d0e4;">C4</div>
<div class="t" style="left:321px;top:353.1px;color:#d2d0e4;">C4</div>
<div class="t" style="left:342px;top:353.1px;color:#d2d0e4;">C4</div>
<div class="t" style="left:363px;top:353.1px;color:#d2d0e4;">C4</div>
<div class="t" style="left:384px;top:353.1px;color:#d2d0e4;">C4</div>
<div class="t" style="left:405px;top:353.1px;color:#858399;">00</div>
<div class="t" style="left:426px;top:353.1px;color:#d2d0e4;">02</div>
<div class="t" style="left:447px;top:353.1px;color:#d2d0e4;">02</div>
<div class="t" style="left:473px;top:353.1px;color:#d2d0e4;"><span style="color:#b3b1c6">.</span><span style="color:#b3b1c6">.</span><span style="color:#b3b1c6">.</span><span style="color:#b3b1c6">.</span><span style="color:#b3b1c6">.</span><span style="color:#b3b1c6">.</span><span style="color:#b3b1c6">.</span><span style="color:#b3b1c6">.</span><span style="color:#b3b1c6">.</span><span style="color:#b3b1c6">.</span><span style="color:#b3b1c6">.</span><span style="color:#b3b1c6">.</span><span style="color:#b3b1c6">.</span><span style="color:#b3b1c6">.</span><span style="color:#b3b1c6">.</span><span style="color:#b3b1c6">.</span></div>
<div class="t" style="left:49px;top:369.1px;color:#d2d0e4;">00000100:</div>
<div class="t" style="left:125px;top:369.1px;color:#d2d0e4;">05</div>
<div class="t" style="left:146px;top:369.1px;color:#858399;">00</div>
<div class="t" style="left:167px;top:369.1px;color:#d2d0e4;">03</div>
<div class="t" style="left:188px;top:369.1px;color:#858399;">00</div>
<div class="t" style="left:209px;top:369.1px;color:#858399;">00</div>
<div class="t" style="left:230px;top:369.1px;color:#858399;">00</div>
<div class="t" style="left:251px;top:369.1px;color:#d2d0e4;">E8</div>
<div class="t" style="left:272px;top:369.1px;color:#858399;">00</div>
<div class="t" style="left:300px;top:369.1px;color:#858399;">00</div>
<div class="t" style="left:321px;top:369.1px;color:#858399;">00</div>
<div class="t" style="left:342px;top:369.1px;color:#858399;">00</div>
<div class="t" style="left:363px;top:369.1px;color:#858399;">00</div>
<div class="t" style="left:473px;top:369.1px;color:#d2d0e4;"><span style="color:#b3b1c6">.</span><span style="color:#b3b1c6">.</span><span style="color:#b3b1c6">.</span><span style="color:#b3b1c6">.</span><span style="color:#b3b1c6">.</span><span style="color:#b3b1c6">.</span><span style="color:#b3b1c6">.</span><span style="color:#b3b1c6">.</span><span style="color:#b3b1c6">.</span><span style="color:#b3b1c6">.</span><span style="color:#b3b1c6">.</span><span style="color:#b3b1c6">.</span></div>
<div style="left:606px;top:85px;width:10px;height:369px;background:#858399;border-radius:5px"></div>
<div style="left:49px;top:644px;width:569px;height:48px;border:1px solid #a9a7bf"></div>
<div style="left:59px;top:654px;width:24px;height:23px;background:#4a4868;border:2px solid #aaa6d6"></div>
<div class="t" style="left:63px;top:657px;color:#d8d6ea;font-family:'Liberation Sans', sans-serif;font-size:11px;letter-spacing:0">Aa</div>
<div style="left:90px;top:654px;width:24px;height:23px;background:#4a4868;border:2px solid #aaa6d6"></div>
<svg style="left:95px;top:657px" width="14" height="17"><circle cx="7" cy="6" r="4.5" fill="#d8d6ea"/><rect x="5" y="10" width="4" height="4" fill="#d8d6ea"/></svg>
<div style="left:121px;top:654px;width:24px;height:23px;background:#4a4868;border:2px solid #aaa6d6"></div>
<div class="t" style="left:123px;top:657px;color:#d8d6ea;font-family:'Liberation Sans', sans-serif;font-size:11px;letter-spacing:-0.3px">abc</div>
<div style="left:145px;top:654px;width:24px;height:23px;background:#4a4863;border:2px solid #a6a3bf"></div>
<div class="t" style="left:151px;top:656px;color:#c8c6dc;font-family:'Liberation Sans', sans-serif;font-size:14px;letter-spacing:0">¶</div>
<div style="left:169px;top:654px;width:24px;height:23px;background:#3a3850;border:2px solid #8e8aa8"></div>
<svg style="left:174px;top:659px" width="14" height="13"><path d="M1 1 H13 V9 H6 L3.5 12 V9 H1 Z" fill="none" stroke="#b0aec4" stroke-width="1"/><path d="M5.5 3.5 L4 5 L5.5 6.5 M8.5 3.5 L10 5 L8.5 6.5" fill="none" stroke="#b0aec4" stroke-width="0.9"/></svg>
<div style="left:193px;top:654px;width:24px;height:23px;background:#4a4863;border:2px solid #a6a3bf"></div>
<svg style="left:198px;top:659px" width="14" height="13"><path d="M1 2.5 L4.5 1 L9 2.5 L13 1 V10.5 L9 12 L4.5 10.5 L1 12 Z M4.5 1 V10.5 M9 2.5 V12" fill="none" stroke="#c8c6dc" stroke-width="1"/></svg>
<div style="left:217px;top:654px;width:24px;height:23px;background:#4a4863;border:2px solid #a6a3bf"></div>
<svg style="left:222px;top:659px" width="14" height="13"><rect x="1" y="1" width="12" height="11" fill="none" stroke="#c8c6dc" stroke-width="1"/><path d="M1 4 H13 M1 6.7 H13 M1 9.3 H13 M4.5 1 V12 M8.5 1 V12" stroke="#c8c6dc" stroke-width="0.9"/></svg>
<div style="left:323px;top:654px;width:24px;height:23px;background:#3f3d57;border:2px solid #a6a3bf"></div>
<svg style="left:327px;top:657px" width="16" height="16"><path d="M2 8.5 L8 3 L14 8.5 M2 13 L8 7.5 L14 13" fill="none" stroke="#d0cee4" stroke-width="1.1"/></svg>
<div style="left:628px;top:75px;width:638px;height:621px;background:#262539"></div>
<div style="left:636px;top:83px;width:31px;height:23px;background:#4e4b6a;border:2px solid #b9b6d9"></div>
<svg style="left:644px;top:87px" width="16" height="14"><path d="M2 2 V11 M10.5 2 L5.5 6.5 L10.5 11" fill="none" stroke="#dcdaf0" stroke-width="1.1"/></svg>
<div style="left:674px;top:83px;width:270px;height:23px;background:#4e4b6a;border:2px solid #b9b6d9"></div>
<svg style="left:799px;top:87px" width="10" height="14"><path d="M7 2 L2.5 6.5 L7 11" fill="none" stroke="#dcdaf0" stroke-width="1.2"/></svg>
<div style="left:951px;top:83px;width:270px;height:23px;background:#4e4b6a;border:2px solid #b9b6d9"></div>
<svg style="left:1076px;top:87px" width="10" height="14"><path d="M2.5 2 L7 6.5 L2.5 11" fill="none" stroke="#dcdaf0" stroke-width="1.2"/></svg>
<div style="left:1228px;top:83px;width:31px;height:23px;background:#4e4b6a;border:2px solid #b9b6d9"></div>
<svg style="left:1235px;top:87px" width="16" height="14"><path d="M3 2 L8 6.5 L3 11 M11.5 2 V11" fill="none" stroke="#dcdaf0" stroke-width="1.1"/></svg>
<div style="left:636px;top:109px;width:622px;height:554px;border:1px solid #a9a7bf;background:#282739"></div>
<div style="left:637px;top:110px;width:607px;height:19px;background:#74738f"></div>
<div style="left:1244px;top:110px;width:13px;height:552px;background:#2b2a3e"></div>
<div style="left:1246px;top:280px;width:10px;height:381px;background:#858399;border-radius:5px"></div>
<div class="t" style="left:641px;top:113.1px;color:#dddbee;">Name</div>
<div class="t" style="left:762px;top:113.1px;color:#dddbee;">Value</div>
<div style="left:757px;top:110px;width:1px;height:553px;background:#a9a7bf"></div>
<div style="left:637px;top:129px;width:607px;height:1px;background:#a9a7bf"></div>
<div style="left:637px;top:130px;width:607px;height:533px;overflow:hidden">
<div style="left:0;top:-7px;width:607px;height:13px;background:#262537"></div>
<div class="t" style="left:4px;top:-2.9px;color:#dddbee">int64_t</div>
<div class="t" style="left:125px;top:-2.9px;color:#dddbee">-4268286543434696002</div>
<div style="left:0;top:14px;width:607px;height:19px;background:#211f2d"></div>
<div style="left:0;top:13px;width:607px;height:1px;background:#a9a7bf"></div>
<div class="t" style="left:4px;top:17.1px;color:#dddbee">half float</div>
<div class="t" style="left:125px;top:17.1px;color:#dddbee">-0.842773</div>
<div style="left:0;top:34px;width:607px;height:19px;background:#262537"></div>
<div style="left:0;top:33px;width:607px;height:1px;background:#a9a7bf"></div>
<div class="t" style="left:4px;top:37.1px;color:#dddbee">float</div>
<div class="t" style="left:125px;top:37.1px;color:#dddbee">-8.34698E+06</div>
<div style="left:0;top:54px;width:607px;height:19px;background:#211f2d"></div>
<div style="left:0;top:53px;width:607px;height:1px;background:#a9a7bf"></div>
<div class="t" style="left:4px;top:57.1px;color:#dddbee">double</div>
<div class="t" style="left:125px;top:57.1px;color:#dddbee">-1.88895E+23</div>
<div style="left:0;top:74px;width:607px;height:19px;background:#262537"></div>
<div style="left:0;top:73px;width:607px;height:1px;background:#a9a7bf"></div>
<div class="t" style="left:4px;top:77.1px;color:#dddbee">long double</div>
<div class="t" style="left:125px;top:77.1px;color:#dddbee">-5.55091E+367</div>
<div style="left:0;top:94px;width:607px;height:19px;background:#211f2d"></div>
<div style="left:0;top:93px;width:607px;height:1px;background:#a9a7bf"></div>
<div class="t" style="left:4px;top:97.1px;color:#dddbee">bfloat16</div>
<div class="t" style="left:125px;top:97.1px;color:#dddbee">-0.00144958</div>
<div style="left:0;top:114px;width:607px;height:19px;background:#262537"></div>
<div style="left:0;top:113px;width:607px;height:1px;background:#a9a7bf"></div>
<div class="t" style="left:4px;top:117.1px;color:#dddbee">fp24</div>
<div class="t" style="left:125px;top:117.1px;color:#dddbee">-1.59515E+19</div>
<div style="left:0;top:134px;width:607px;height:19px;background:#211f2d"></div>
<div style="left:0;top:133px;width:607px;height:1px;background:#a9a7bf"></div>
<div class="t" style="left:4px;top:137.1px;color:#dddbee">Fixed Point</div>
<div class="t" style="left:125px;top:137.1px;color:#dddbee">186.742 <span style="color:#8d8ba3">(fp8.8)</span></div>
<div style="left:0;top:154px;width:607px;height:19px;background:#262537"></div>
<div style="left:0;top:153px;width:607px;height:1px;background:#a9a7bf"></div>
<div class="t" style="left:4px;top:157.1px;color:#dddbee">sLEB128</div>
<div class="t" style="left:125px;top:157.1px;color:#dddbee">157261118</div>
<div style="left:0;top:174px;width:607px;height:19px;background:#211f2d"></div>
<div style="left:0;top:173px;width:607px;height:1px;background:#a9a7bf"></div>
<div class="t" style="left:4px;top:177.1px;color:#dddbee">uLEB128</div>
<div class="t" style="left:125px;top:177.1px;color:#dddbee">157261118</div>
<div style="left:0;top:194px;width:607px;height:19px;background:#262537"></div>
<div style="left:0;top:193px;width:607px;height:1px;background:#a9a7bf"></div>
<div class="t" style="left:4px;top:197.1px;color:#dddbee">bool</div>
<div class="t" style="left:125px;top:197.1px;color:#dddbee">Invalid</div>
<div style="left:0;top:214px;width:607px;height:19px;background:#211f2d"></div>
<div style="left:0;top:213px;width:607px;height:1px;background:#a9a7bf"></div>
<div class="t" style="left:4px;top:217.1px;color:#dddbee">char</div>
<div class="t" style="left:125px;top:217.1px;color:#dddbee">' '</div>
<div style="left:0;top:234px;width:607px;height:19px;background:#262537"></div>
<div style="left:0;top:233px;width:607px;height:1px;background:#a9a7bf"></div>
<div class="t" style="left:4px;top:237.1px;color:#dddbee">wchar_t</div>
<div class="t" style="left:125px;top:237.1px;color:#dddbee">L' '</div>
<div style="left:0;top:254px;width:607px;height:19px;background:#211f2d"></div>
<div style="left:0;top:253px;width:607px;height:1px;background:#a9a7bf"></div>
<div class="t" style="left:4px;top:257.1px;color:#dddbee">char16_t</div>
<div class="t" style="left:125px;top:257.1px;color:#dddbee">u'뭇'</div>
<div style="left:0;top:274px;width:607px;height:19px;background:#262537"></div>
<div style="left:0;top:273px;width:607px;height:1px;background:#a9a7bf"></div>
<div class="t" style="left:4px;top:277.1px;color:#dddbee">char32_t</div>
<div class="t" style="left:125px;top:277.1px;color:#dddbee">U'???'</div>
<div style="left:0;top:294px;width:607px;height:19px;background:#211f2d"></div>
<div style="left:0;top:293px;width:607px;height:1px;background:#a9a7bf"></div>
<div class="t" style="left:4px;top:297.1px;color:#dddbee">UTF-8 code point</div>
<div class="t" style="left:125px;top:297.1px;color:#dddbee">'Invalid' (U+FFFD)</div>
<div style="left:0;top:314px;width:607px;height:19px;background:#5b7888"></div>
<div style="left:0;top:313px;width:607px;height:1px;background:#a9a7bf"></div>
<div class="t" style="left:4px;top:317.1px;color:#c9d3dc">String</div>
<div class="t" style="left:125px;top:317.1px;color:#c9d3dc">"\xBE\xBA\xFE\xCA"</div>
<div style="left:0;top:334px;width:607px;height:19px;background:#211f2d"></div>
<div style="left:0;top:333px;width:607px;height:1px;background:#a9a7bf"></div>
<div class="t" style="left:4px;top:337.1px;color:#dddbee">Wide String</div>
<div class="t" style="left:125px;top:337.1px;color:#dddbee">L"Invalid"</div>
<div style="left:0;top:354px;width:607px;height:19px;background:#262537"></div>
<div style="left:0;top:353px;width:607px;height:1px;background:#a9a7bf"></div>
<div class="t" style="left:4px;top:357.1px;color:#dddbee">String16</div>
<div class="t" style="left:125px;top:357.1px;color:#dddbee">u"뭇쨻"</div>
<div style="left:0;top:374px;width:607px;height:19px;background:#211f2d"></div>
<div style="left:0;top:373px;width:607px;height:1px;background:#a9a7bf"></div>
<div class="t" style="left:4px;top:377.1px;color:#dddbee">String32</div>
<div class="t" style="left:125px;top:377.1px;color:#dddbee">U"Invalid"</div>
<div style="left:0;top:394px;width:607px;height:19px;background:#262537"></div>
<div style="left:0;top:393px;width:607px;height:1px;background:#a9a7bf"></div>
<div class="t" style="left:4px;top:397.1px;color:#dddbee">Custom Encoding</div>
<div class="t" style="left:125px;top:397.1px;color:#dddbee"><span style="color:#8d8ba3">No encoding selected</span></div>
<div style="left:0;top:414px;width:607px;height:19px;background:#211f2d"></div>
<div style="left:0;top:413px;width:607px;height:1px;background:#a9a7bf"></div>
<div class="t" style="left:4px;top:417.1px;color:#dddbee">time_t</div>
<div class="t" style="left:125px;top:417.1px;color:#dddbee">Invalid</div>
<div style="left:0;top:434px;width:607px;height:19px;background:#262537"></div>
<div style="left:0;top:433px;width:607px;height:1px;background:#a9a7bf"></div>
<div class="t" style="left:4px;top:437.1px;color:#dddbee">DOS Date</div>
<div class="t" style="left:125px;top:437.1px;color:#dddbee">30/5/2073</div>
<div style="left:0;top:454px;width:607px;height:19px;background:#211f2d"></div>
<div style="left:0;top:453px;width:607px;height:1px;background:#a9a7bf"></div>
<div class="t" style="left:4px;top:457.1px;color:#dddbee">DOS Time</div>
<div class="t" style="left:125px;top:457.1px;color:#dddbee">23:21:60</div>
<div style="left:0;top:474px;width:607px;height:19px;background:#262537"></div>
<div style="left:0;top:473px;width:607px;height:1px;background:#a9a7bf"></div>
<div class="t" style="left:4px;top:477.1px;color:#dddbee">GUID</div>
<div class="t" style="left:125px;top:477.1px;color:#dddbee">Invalid {CAFEBABE-0000-C4C4-C4C4-C4C4C4C4C4C4}</div>
<div style="left:0;top:494px;width:607px;height:19px;background:#211f2d"></div>
<div style="left:0;top:493px;width:607px;height:1px;background:#a9a7bf"></div>
<div class="t" style="left:4px;top:497.1px;color:#dddbee">RGBA8 Color</div>
<div style="left:0;top:514px;width:607px;height:19px;background:#262537"></div>
<div style="left:0;top:513px;width:607px;height:1px;background:#a9a7bf"></div>
<div class="t" style="left:4px;top:517.1px;color:#dddbee">RGB565 Color</div>
<div style="left:120px;top:0;width:1px;height:533px;background:#a9a7bf"></div>
</div>
<div style="left:763px;top:626px;width:475px;height:14px;background-color:#c3bbef;background-image:linear-gradient(45deg,#aca4d8 25%,transparent 25%,transparent 75%,#aca4d8 75%),linear-gradient(45deg,#aca4d8 25%,transparent 25%,transparent 75%,#aca4d8 75%);background-size:11px 11px;background-position:0 0,5.5px 5.5px"></div>
<div style="left:763px;top:646px;width:475px;height:14px;background:#e550ae"></div>
<div style="left:636px;top:667px;width:591px;height:22px;border:1px solid #a9a7bf;border-radius:5px;background:#272639"></div>
<svg style="left:644px;top:673px" width="8" height="10"><path d="M0.5 0.5 L7 5 L0.5 9.5 Z" fill="#d8d6ee"/></svg>
<div class="t" style="left:660px;top:672.1px;color:#dddbee;">Settings</div>
<div style="left:1235px;top:667px;width:24px;height:23px;background:#4a4868;border:2px solid #aaa6c8"></div>
<svg style="left:1239px;top:671px" width="16" height="15"><path d="M3 12 L12 3 L13.5 4.5 L4.5 13.5 L2.5 14 Z" fill="none" stroke="#e0def0" stroke-width="1"/></svg>
<div style="left:1268px;top:75px;width:643px;height:968px;background:#26253a"></div>
<div style="left:1891px;top:496px;width:10px;height:117px;background:#858399;border-radius:2px"></div>
<div style="left:1268px;top:83px;width:643px;height:612px;overflow:hidden">
<div class="t" style="left:18px;top:-5.9px;color:#8e8ca4">137</div>
<div class="t" style="left:63px;top:-5.9px"><span style="color:#b2b0c6">        </span><span style="color:#e3737d">u8</span><span style="color:#b2b0c6"> data[get_eoi_marker_position() - $];</span></div>
<div class="t" style="left:18px;top:10.1px;color:#8e8ca4">138</div>
<div class="t" style="left:63px;top:10.1px"><span style="color:#b2b0c6">    } </span><span style="color:#c8a2e8">else</span><span style="color:#b2b0c6"> {</span></div>
<div class="t" style="left:18px;top:26.1px;color:#8e8ca4">139</div>
<div class="t" style="left:63px;top:26.1px"><span style="color:#b2b0c6">        type::Magic&lt;</span><span style="color:#a8d190">"\xff"</span><span style="color:#b2b0c6">&gt; magic;</span></div>
<div class="t" style="left:18px;top:42.1px;color:#8e8ca4">140</div>
<div class="t" style="left:63px;top:42.1px"><span style="color:#b2b0c6">        Marker marker;</span></div>
<div class="t" style="left:18px;top:58.1px;color:#8e8ca4">141</div>
<div class="t" style="left:63px;top:58.1px"></div>
<div class="t" style="left:18px;top:74.1px;color:#8e8ca4">142</div>
<div class="t" style="left:63px;top:74.1px"><span style="color:#b2b0c6">        </span><span style="color:#c8a2e8">if</span><span style="color:#b2b0c6"> (marker == Marker::SOI || marker == Marker::EOI) {</span></div>
<div class="t" style="left:18px;top:90.1px;color:#8e8ca4">143</div>
<div class="t" style="left:63px;top:90.1px"></div>
<div class="t" style="left:18px;top:106.1px;color:#8e8ca4">144</div>
<div class="t" style="left:63px;top:106.1px"><span style="color:#b2b0c6">        } </span><span style="color:#c8a2e8">else</span><span style="color:#b2b0c6"> {</span></div>
<div class="t" style="left:18px;top:122.1px;color:#8e8ca4">145</div>
<div class="t" style="left:63px;top:122.1px"><span style="color:#b2b0c6">            </span><span style="color:#e3737d">u16</span><span style="color:#b2b0c6"> length;</span></div>
<div class="t" style="left:18px;top:138.1px;color:#8e8ca4">146</div>
<div class="t" style="left:63px;top:138.1px"><span style="color:#b2b0c6">            </span><span style="color:#c8a2e8">if</span><span style="color:#b2b0c6"> (marker == Marker::APP0) {</span></div>
<div class="t" style="left:18px;top:154.1px;color:#8e8ca4">147</div>
<div class="t" style="left:63px;top:154.1px"><span style="color:#b2b0c6">                APP0 data;</span></div>
<div class="t" style="left:18px;top:170.1px;color:#8e8ca4">148</div>
<div class="t" style="left:63px;top:170.1px"><span style="color:#b2b0c6">                </span><span style="color:#e3737d">u8</span><span style="color:#b2b0c6"> xtra_data[length - </span><span style="color:#c2aaf2">sizeof</span><span style="color:#b2b0c6">(length) - </span><span style="color:#c2aaf2">sizeof</span><span style="color:#b2b0c6">(data)];</span></div>
<div class="t" style="left:18px;top:186.1px;color:#8e8ca4">149</div>
<div class="t" style="left:63px;top:186.1px"><span style="color:#b2b0c6">            } </span><span style="color:#c8a2e8">else if</span><span style="color:#b2b0c6"> (marker == Marker::APP14) {</span></div>
<div class="t" style="left:18px;top:202.1px;color:#8e8ca4">150</div>
<div class="t" style="left:63px;top:202.1px"><span style="color:#b2b0c6">                APP14 data;</span></div>
<div class="t" style="left:18px;top:218.1px;color:#8e8ca4">151</div>
<div class="t" style="left:63px;top:218.1px"><span style="color:#b2b0c6">            } </span><span style="color:#c8a2e8">else if</span><span style="color:#b2b0c6"> (marker == Marker::COM) {</span></div>
<div class="t" style="left:18px;top:234.1px;color:#8e8ca4">152</div>
<div class="t" style="left:63px;top:234.1px"><span style="color:#b2b0c6">                </span><span style="color:#e3737d">char</span><span style="color:#b2b0c6"> data[length - </span><span style="color:#c2aaf2">sizeof</span><span style="color:#b2b0c6">(length)];</span></div>
<div class="t" style="left:18px;top:250.1px;color:#8e8ca4">153</div>
<div class="t" style="left:63px;top:250.1px"><span style="color:#b2b0c6">            } </span><span style="color:#c8a2e8">else if</span><span style="color:#b2b0c6"> (marker == Marker::SOF0) {</span></div>
<div class="t" style="left:18px;top:266.1px;color:#8e8ca4">154</div>
<div class="t" style="left:63px;top:266.1px"><span style="color:#b2b0c6">                SOF0 data;</span></div>
<div class="t" style="left:18px;top:282.1px;color:#8e8ca4">155</div>
<div class="t" style="left:63px;top:282.1px"><span style="color:#b2b0c6">            } </span><span style="color:#c8a2e8">else if</span><span style="color:#b2b0c6"> (marker == Marker::SOS) {</span></div>
<div class="t" style="left:18px;top:298.1px;color:#8e8ca4">156</div>
<div class="t" style="left:63px;top:298.1px"><span style="color:#b2b0c6">                SOS data;</span></div>
<div class="t" style="left:18px;top:314.1px;color:#8e8ca4">157</div>
<div class="t" style="left:63px;top:314.1px"><span style="color:#b2b0c6">            } </span><span style="color:#c8a2e8">else</span><span style="color:#b2b0c6"> {</span></div>
<div class="t" style="left:18px;top:330.1px;color:#8e8ca4">158</div>
<div class="t" style="left:63px;top:330.1px"><span style="color:#b2b0c6">                </span><span style="color:#e3737d">u8</span><span style="color:#b2b0c6"> data[length - </span><span style="color:#c2aaf2">sizeof</span><span style="color:#b2b0c6">(length)] [[sealed]];</span></div>
<div class="t" style="left:18px;top:346.1px;color:#8e8ca4">159</div>
<div class="t" style="left:63px;top:346.1px"><span style="color:#b2b0c6">            }</span></div>
<div class="t" style="left:18px;top:362.1px;color:#8e8ca4">160</div>
<div class="t" style="left:63px;top:362.1px"><span style="color:#b2b0c6">        }</span></div>
<div class="t" style="left:18px;top:378.1px;color:#8e8ca4">161</div>
<div class="t" style="left:63px;top:378.1px"><span style="color:#b2b0c6">    }</span></div>
<div class="t" style="left:18px;top:394.1px;color:#8e8ca4">162</div>
<div class="t" style="left:63px;top:394.1px"><span style="color:#b2b0c6">} [[format_read(</span><span style="color:#a8d190">"segment_read"</span><span style="color:#b2b0c6">)]];</span></div>
<div class="t" style="left:18px;top:410.1px;color:#8e8ca4">163</div>
<div class="t" style="left:63px;top:410.1px"></div>
<div class="t" style="left:18px;top:426.1px;color:#8e8ca4">164</div>
<div class="t" style="left:63px;top:426.1px"><span style="color:#c8a2e8">fn</span><span style="color:#b2b0c6"> segment_read(Segment s) {</span></div>
<div class="t" style="left:18px;top:442.1px;color:#8e8ca4">165</div>
<div class="t" style="left:63px;top:442.1px"><span style="color:#b2b0c6">    </span><span style="color:#c8a2e8">return</span><span style="color:#b2b0c6"> std::format(</span><span style="color:#a8d190">"{}"</span><span style="color:#b2b0c6">, s.marker);</span></div>
<div class="t" style="left:18px;top:458.1px;color:#8e8ca4">166</div>
<div class="t" style="left:63px;top:458.1px"><span style="color:#b2b0c6">};</span></div>
<div class="t" style="left:18px;top:474.1px;color:#8e8ca4">167</div>
<div class="t" style="left:63px;top:474.1px"></div>
<div class="t" style="left:18px;top:490.1px;color:#8e8ca4">168</div>
<div class="t" style="left:63px;top:490.1px"><span style="color:#b2b0c6">Segment segments[</span><span style="color:#c8a2e8">while</span><span style="color:#b2b0c6">(!std::mem::eof())] @ </span><span style="color:#e8a06a">0x00</span><span style="color:#b2b0c6"> [[hex::visualize(</span><span style="color:#a8d190">"image"</span><span style="color:#b2b0c6">, </span><span style="color:#c8a2e8">this</span><span style="color:#b2b0c6">)]]</span></div>
<div class="t" style="left:18px;top:506.1px;color:#8e8ca4">169</div>
<div class="t" style="left:63px;top:506.1px"></div>
</div>
<div style="left:1323px;top:699px;width:483px;height:10px;background:#858399"></div>
<div style="left:1276px;top:715px;width:627px;height:297px;border:1px solid #a9a7bf;background:#272639"></div>
<div style="left:1889px;top:726px;width:11px;height:146px;background:#858399;border-radius:2px"></div>
<div style="left:1277px;top:716px;width:611px;height:295px;overflow:hidden">
<div class="t" style="left:17px;top:4.1px;color:#b0838b">E: &lt;Source Code&gt;:158:48 at address 0x0006</div>
<div class="t" style="left:17px;top:20.1px;color:#b0838b">E: 158 |  data[length - sizeof(length)] [[sealed]];</div>
<div class="t" style="left:17px;top:36.1px;color:#b0838b">E:                                    ^</div>
<div class="t" style="left:17px;top:52.1px;color:#b0838b">E: &lt;Source Code&gt;:159:13 at address 0x0006</div>
<div class="t" style="left:17px;top:68.1px;color:#b0838b">E: 159 |             }</div>
<div class="t" style="left:17px;top:84.1px;color:#b0838b">E:                   ^</div>
<div class="t" style="left:17px;top:100.1px;color:#b0838b">E: &lt;Source Code&gt;:160:9 at address 0x0004</div>
<div class="t" style="left:17px;top:116.1px;color:#b0838b">E: 160 |         }</div>
<div class="t" style="left:17px;top:132.1px;color:#b0838b">E:               ^</div>
<div class="t" style="left:17px;top:148.1px;color:#b0838b">E: &lt;Source Code&gt;:161:5 at address 0x0002</div>
<div class="t" style="left:17px;top:164.1px;color:#b0838b">E: 161 |     }</div>
<div class="t" style="left:17px;top:180.1px;color:#b0838b">E:           ^</div>
<div class="t" style="left:17px;top:196.1px;color:#b0838b">E: &lt;Source Code&gt;:134:8 at address 0x0002</div>
<div class="t" style="left:17px;top:212.1px;color:#b0838b">E: 134 | struct Segment {</div>
<div class="t" style="left:17px;top:228.1px;color:#b0838b">E:              ^^^^^^^</div>
<div class="t" style="left:17px;top:244.1px;color:#b0838b">E: &lt;Source Code&gt;:168:1 at address 0x0002</div>
<div class="t" style="left:17px;top:260.1px;color:#b0838b">E: 168 | Segment segments[while(!std::me</div>
<div class="t" style="left:17px;top:276.1px;color:#b0838b">E:       ^^^^^^^</div>
<div class="t" style="left:17px;top:292.1px;color:#b0838b">E: &lt;Source Code&gt;:168:1 at address 0x0002</div>
</div>
<div style="left:1276px;top:1019px;width:24px;height:23px;background:#4e5a82;border:2px solid #b2b6da"></div>
<svg style="left:1281px;top:1023px" width="14" height="15"><path d="M3.5 2.5 L11.5 7.5 L3.5 12.5 Z" fill="none" stroke="#9ed88f" stroke-width="1.3"/></svg>
<div style="left:1309px;top:1019px;width:24px;height:23px;background:#4a4868;border:2px solid #a8a5c8"></div>
<div style="left:1337px;top:1019px;width:24px;height:23px;background:#4a4868;border:2px solid #a8a5c8"></div>
<div style="left:1370px;top:1019px;width:24px;height:23px;background:#4a4868;border:2px solid #a8a5c8"></div>
<svg style="left:1313px;top:1023px" width="16" height="15"><path d="M4.5 13 L12.5 5 L13.8 6.3 L5.8 14.3 L4 14.5 Z" fill="none" stroke="#d6d4ea" stroke-width="1"/><path d="M5 1 Q5.4 4.2 8 4.5 Q5.4 4.8 5 8 Q4.6 4.8 2 4.5 Q4.6 4.2 5 1 Z" fill="#d6d4ea"/></svg>
<svg style="left:1341px;top:1022px" width="16" height="16"><path d="M3 3 H8 M3 3 V13.5 H12.5 V9" fill="none" stroke="#d6d4ea" stroke-width="1"/><path d="M4.5 5.5 H7 M4.5 7.5 H8 M4.5 9.5 H8" stroke="#d6d4ea" stroke-width="0.9"/><rect x="9" y="1" width="3.5" height="3" fill="none" stroke="#d6d4ea" stroke-width="0.9"/><path d="M8.5 4.5 H13 M10.7 4.5 V9" stroke="#d6d4ea" stroke-width="1"/><path d="M4 12 H7 M9 12 H11" stroke="#d6d4ea" stroke-width="0.9"/></svg>
<svg style="left:1374px;top:1023px" width="16" height="15"><path d="M12.38 6.11 L14.15 6.13 L14.15 8.87 L12.38 8.89 L12.09 9.61 L13.32 10.88 L11.38 12.82 L10.11 11.59 L9.39 11.88 L9.37 13.65 L6.63 13.65 L6.61 11.88 L5.89 11.59 L4.62 12.82 L2.68 10.88 L3.91 9.61 L3.62 8.89 L1.85 8.87 L1.85 6.13 L3.62 6.11 L3.91 5.39 L2.68 4.12 L4.62 2.18 L5.89 3.41 L6.61 3.12 L6.63 1.35 L9.37 1.35 L9.39 3.12 L10.11 3.41 L11.38 2.18 L13.32 4.12 L12.09 5.39 Z" fill="none" stroke="#d6d4ea" stroke-width="1"/><circle cx="8" cy="7.5" r="1.8" fill="none" stroke="#d6d4ea" stroke-width="1"/></svg>
<div style="left:1401px;top:1021px;width:1px;height:20px;background:#8a88a0"></div>
<div class="t" style="left:1410px;top:1024.1px;color:#dddbee;">6 / 1048576</div>
<div style="left:41px;top:698px;width:1225px;height:345px;background:#262539"></div>
<div style="left:41px;top:698px;width:1225px;height:21px;background:#222132"></div>
<div style="left:45px;top:700px;width:133px;height:20px;background:#4d4b66;border-radius:4px 4px 0 0"></div>
<svg style="left:51px;top:702px" width="12" height="14"><ellipse cx="6" cy="2.5" rx="4.5" ry="1.8" fill="none" stroke="#c8c6e0" stroke-width="1"/><path d="M1.5 2.5 V11.5 Q6 14.5 10.5 11.5 V2.5" fill="none" stroke="#c8c6e0" stroke-width="1"/></svg>
<div class="t" style="left:71px;top:704.1px;color:#dddbee;">Pattern Data</div>
<svg style="left:161px;top:705px" width="11" height="11"><path d="M0.5 0.5 L10.5 10.5 M10.5 0.5 L0.5 10.5" stroke="#dcdaee" stroke-width="1.2"/></svg>
<div style="left:41px;top:719px;width:1225px;height:1px;background:#5d5b78"></div>
<div style="left:49px;top:729px;width:37px;height:20px;background:#6d6a92;border-radius:5px 5px 0 0"></div>
<div class="t" style="left:53px;top:732.9px;color:#dcdaf4;">Main</div>
<div style="left:41px;top:749px;width:1216px;height:1px;background:#8a88a8"></div>
<div style="left:49px;top:754px;width:23px;height:22px;background:#8c8aa8"></div>
<svg style="left:53px;top:758px" width="16" height="15"><path d="M1 1.5 H14 L9 7.5 V12.5 L6 12.5 V7.5 Z" fill="none" stroke="#e0def0" stroke-width="1.1"/></svg>
<div style="left:1200px;top:729px;width:27px;height:20px;background:#4d4b66;border-radius:5px 5px 0 0"></div>
<svg style="left:1205px;top:731px" width="16" height="16"><circle cx="8" cy="8" r="6.5" fill="none" stroke="#c8c6dc" stroke-width="1"/><circle cx="8" cy="4.5" r="1" fill="#c8c6dc"/><path d="M4.5 6.5 H11.5 M8 6.5 V9 L6 12.5 M8 9 L10 12.5" fill="none" stroke="#c8c6dc" stroke-width="1"/></svg>
<div style="left:1231px;top:729px;width:27px;height:20px;background:#4d4b66;border-radius:5px 5px 0 0"></div>
<svg style="left:1236px;top:731px" width="16" height="16"><path d="M8 2 V7 L3 12 M8 7 L13 12" fill="none" stroke="#c8c6dc" stroke-width="1.1"/><circle cx="8" cy="2.5" r="1.5" fill="#c8c6dc"/><circle cx="3" cy="12.5" r="1.5" fill="#c8c6dc"/><circle cx="13" cy="12.5" r="1.5" fill="#c8c6dc"/></svg>
<div style="left:1119px;top:754px;width:25px;height:23px;background:#3e3c56;border:2px solid #a8a5c8"></div>
<svg style="left:1123px;top:758px" width="17" height="15"><path d="M1.5 2 H8 V13 H1.5 Z M8.5 2 H15 V13 H8.5 Z" fill="none" stroke="#d0cee4" stroke-width="1"/><path d="M3 5 H6.5 M3 7.5 H6.5 M3 10 H6.5 M10 5 H13.5 M10 7.5 H13.5 M10 10 H13.5" stroke="#d0cee4" stroke-width="0.8"/></svg>
<div style="left:1150px;top:754px;width:25px;height:23px;background:#3e3c56;border:2px solid #a8a5c8"></div>
<svg style="left:1154px;top:758px" width="17" height="15"><path d="M2 3 H8 M10 3 H14 M2 6 H11 M2 9 H14 M2 12 H9" stroke="#d0cee4" stroke-width="1.1"/></svg>
<div style="left:1173px;top:754px;width:25px;height:23px;background:#3e3c56;border:2px solid #a8a5c8"></div>
<svg style="left:1177px;top:758px" width="17" height="15"><path d="M2 2.5 H14 M5 5.5 H13 M5 8.5 H14 M5 11.5 H12 M3.5 2.5 V12" stroke="#d0cee4" stroke-width="1.1"/></svg>
<div style="left:1196px;top:754px;width:25px;height:23px;background:#3e3c56;border:2px solid #a8a5c8"></div>
<svg style="left:1200px;top:758px" width="17" height="15"><path d="M2 3 H14 M2 6 H12 M2 9 H14 M2 12 H10" stroke="#d0cee4" stroke-width="1.1"/></svg>
<div style="left:1234px;top:754px;width:25px;height:23px;background:#3e3c56;border:2px solid #a8a5c8"></div>
<svg style="left:1237px;top:758px" width="18" height="15"><path d="M2 2 V13 M4 7.5 H15 M11.5 4 L15 7.5 L11.5 11" fill="none" stroke="#d0cee4" stroke-width="1.1"/></svg>
<div style="left:49px;top:780px;width:1209px;height:256px;border:1px solid #a9a7bf;background:#232233"></div>
<div style="left:50px;top:781px;width:1207px;height:19px;background:#74738f"></div>
<div style="left:50px;top:800px;width:1207px;height:1px;background:#a9a7bf"></div>
<div style="left:50px;top:801px;width:1207px;height:19px;background:#1f1e2c"></div>
<div style="left:50px;top:820px;width:1207px;height:1px;background:#a9a7bf"></div>
<div style="left:74px;top:781px;width:1px;height:254px;background:#a9a7bf"></div>
<div style="left:243px;top:781px;width:1px;height:254px;background:#a9a7bf"></div>
<div style="left:412px;top:781px;width:1px;height:254px;background:#a9a7bf"></div>
<div style="left:581px;top:781px;width:1px;height:254px;background:#a9a7bf"></div>
<div style="left:750px;top:781px;width:1px;height:254px;background:#a9a7bf"></div>
<div style="left:919px;top:781px;width:1px;height:254px;background:#a9a7bf"></div>
<div style="left:1088px;top:781px;width:1px;height:254px;background:#a9a7bf"></div>
<div class="t" style="left:79px;top:784.1px;color:#dddbee;">Name</div>
<div class="t" style="left:248px;top:784.1px;color:#dddbee;">Color</div>
<div class="t" style="left:417px;top:784.1px;color:#dddbee;">Start</div>
<div class="t" style="left:586px;top:784.1px;color:#dddbee;">End</div>
<div class="t" style="left:755px;top:784.1px;color:#dddbee;">Size</div>
<div class="t" style="left:924px;top:784.1px;color:#dddbee;">Type</div>
<div class="t" style="left:1094px;top:784.1px;color:#dddbee;">Value</div>
<svg style="left:570px;top:784px" width="9" height="7"><path d="M0.5 6.5 L4.5 0.5 L8.5 6.5 Z" fill="#e8e6f6"/></svg>
<div style="left:53px;top:802px;width:17px;height:17px;background:#3e3c56;border:2px solid #a8a5c8"></div>
<svg style="left:55px;top:804px" width="13" height="13"><path d="M6.5 1.5 L8 5 L11.5 5.2 L8.8 7.5 L9.8 11 L6.5 9 L3.2 11 L4.2 7.5 L1.5 5.2 L5 5 Z" fill="#5c5a74" stroke="#8c8aa4" stroke-width="0.8"/></svg>
<svg style="left:83px;top:805px" width="8" height="10"><path d="M0.5 0.5 L7 5 L0.5 9.5 Z" fill="#dddbee"/></svg>
<div class="t" style="left:103px;top:804.1px;color:#dddbee;">segments</div>
<div class="t" style="left:417px;top:804.1px;color:#dddbee;">0x00000000</div>
<div class="t" style="left:586px;top:804.1px;color:#dddbee;">0x00000001</div>
<div class="t" style="left:755px;top:804.1px;color:#dddbee;">2 bytes</div>
<div class="t" style="left:924px;top:804.1px;color:#d4d2e6;"><span style="color:#e3737d">Segment</span><span style="color:#dddbee">[1]</span></div>
<div class="t" style="left:1094px;top:804.1px;color:#dddbee;">[ ... ]</div>
<div style="left:41px;top:1048px;width:1870px;height:1px;background:#8e8ca8"></div>
<div style="left:41px;top:1049px;width:1870px;height:22px;background:#262539"></div>
<div class="t" style="left:49px;top:1053.6px;color:#dddbee;">0xE2 - 0xE5 (0x04 | 4 bytes)</div>
<div style="left:254px;top:1052px;width:1px;height:16px;background:#8a88a0"></div>
<div style="left:2px;top:2px;width:29px;height:26px;background:#2d2b40;border-radius:8px"></div>
<div style="left:3px;top:38px;width:27px;height:70px;background:#2d2b40;border-radius:8px"></div>
<div style="left:3px;top:116px;width:27px;height:80px;background:#2d2b40;border-radius:8px"></div>
<div style="left:3px;top:464px;width:27px;height:153px;background:#2d2b40;border-radius:8px"></div>
<svg style="left:9px;top:9px" width="16" height="16"><path d="M13.5 1.5 Q8 1.5 5 7 L3 7.5 L1.5 10 L4.5 10 L6 11.5 L6 14.5 L8.5 13 L9 11 Q14.5 8 14.5 2.5 Z" fill="none" stroke="#dcdcf6" stroke-width="1.3"/><circle cx="10.5" cy="5.5" r="1.2" fill="#dcdcf6"/><path d="M3.5 12.5 L1.5 14.5" stroke="#dcdcf6" stroke-width="1.2"/></svg>
<div style="left:0;top:41.5px;width:33px;text-align:center;font-family:'Liberation Sans', sans-serif;font-size:12px;line-height:14px;color:#e0def4">16</div>
<div style="left:0;top:53.5px;width:33px;text-align:center;font-family:'Liberation Sans', sans-serif;font-size:12px;line-height:14px;color:#e0def4">41</div>
<div style="left:0;top:65.5px;width:33px;text-align:center;font-family:'Liberation Sans', sans-serif;font-size:12px;line-height:14px;color:#e0def4">-</div>
<div style="left:0;top:77.5px;width:33px;text-align:center;font-family:'Liberation Sans', sans-serif;font-size:12px;line-height:14px;color:#e0def4">27</div>
<div style="left:0;top:89.5px;width:33px;text-align:center;font-family:'Liberation Sans', sans-serif;font-size:12px;line-height:14px;color:#e0def4">02</div>
<svg style="left:6px;top:124px" width="22" height="70"><path d="M3.2 11.6 A6.3 6.3 0 1 1 12.8 11.6" fill="none" stroke="#e0def4" stroke-width="1.5"/><path d="M8 7.5 L11 4.5" stroke="#e0def4" stroke-width="1.5"/><rect x="17" y="1" width="3" height="12" rx="1.5" fill="#4a4860"/><rect x="17" y="8" width="3" height="5" rx="1" fill="#7a7890"/><path d="M8.5 27 Q3 32 3 35.5 Q3 40.5 8 40.5 Q13 40.5 13 35.5 Q13 32 10 30 Q10 33 8 33.5 Q7 31 8.5 27 Z" fill="none" stroke="#e0def4" stroke-width="1.4"/><rect x="17" y="26" width="3" height="14" rx="1.5" fill="#3b3a52"/><rect x="17" y="28" width="3" height="12" rx="1.5" fill="#c0bcf0"/><rect x="3" y="54" width="11" height="11" fill="none" stroke="#e0def4" stroke-width="1.4"/><rect x="6.3" y="57.3" width="4.4" height="4.4" fill="none" stroke="#e0def4" stroke-width="1.2"/><path d="M1 56 H3 M1 59.5 H3 M1 63 H3 M14 56 H16 M14 59.5 H16 M14 63 H16 M5.5 52 V54 M8.5 52 V54 M11.5 52 V54 M5.5 65 V67 M8.5 65 V67 M11.5 65 V67" stroke="#e0def4" stroke-width="1"/><rect x="17" y="54" width="3" height="13" rx="1.5" fill="#3b3a52"/><rect x="17" y="58" width="3" height="9" rx="1.5" fill="#c0bcf0"/></svg>
<div style="left:6px;top:206px;width:10.5px;height:10.5px;background:#0a0010"></div>
<div style="left:16.5px;top:206px;width:10.5px;height:10.5px;background:#d40ad6"></div>
<div style="left:6px;top:216.5px;width:10.5px;height:10.5px;background:#d40ad6"></div>
<div style="left:16.5px;top:216.5px;width:10.5px;height:10.5px;background:#0a0010"></div>
<div style="left:6px;top:235px;width:21px;height:21px;border-radius:50%;border:1.5px solid #8a8aa2;background:radial-gradient(circle at 40% 55%,#e0a070 0%,#b8703a 30%,#8a5030 60%,#3a2a38 95%)"></div>
<div style="left:8px;top:469.0px;width:17px;height:17px;border-radius:50%;background:#f2c0e2"></div>
<div style="left:8px;top:470.5px;width:17px;height:14px;text-align:center;font-family:'Liberation Sans', sans-serif;font-weight:bold;font-size:10px;line-height:14px;color:#1e1e2e">1</div>
<div style="left:8px;top:490.0px;width:17px;height:17px;border-radius:50%;background:#f2c0e2"></div>
<div style="left:8px;top:491.5px;width:17px;height:14px;text-align:center;font-family:'Liberation Sans', sans-serif;font-weight:bold;font-size:10px;line-height:14px;color:#1e1e2e">2</div>
<div style="left:8px;top:511.0px;width:17px;height:17px;border-radius:50%;background:#f2c0e2"></div>
<div style="left:8px;top:512.5px;width:17px;height:14px;text-align:center;font-family:'Liberation Sans', sans-serif;font-weight:bold;font-size:10px;line-height:14px;color:#1e1e2e">3</div>
<div style="left:8px;top:532.0px;width:17px;height:17px;border-radius:50%;background:#f2c0e2"></div>
<div style="left:8px;top:533.5px;width:17px;height:14px;text-align:center;font-family:'Liberation Sans', sans-serif;font-weight:bold;font-size:10px;line-height:14px;color:#1e1e2e">4</div>
<div style="left:8px;top:553px;width:17px;height:35px;border-radius:9px;background:#b9c0fb"></div>
<div style="left:8px;top:563px;width:17px;height:14px;text-align:center;font-family:'Liberation Sans', sans-serif;font-weight:bold;font-size:10px;line-height:14px;color:#1e1e2e">5</div>
<div style="left:8px;top:592px;width:17px;height:17px;border-radius:50%;background:#6c5c78"></div>
<div style="left:3px;top:881px;width:27px;height:26px;background:#2a283c;border-radius:10px"></div>
<div style="left:3px;top:914px;width:27px;height:26px;background:#2a283c;border-radius:10px"></div>
<div style="left:3px;top:949px;width:27px;height:26px;background:#2a283c;border-radius:10px"></div>
<div style="left:3px;top:984px;width:27px;height:26px;background:#2a283c;border-radius:10px"></div>
<div style="left:3px;top:1017px;width:27px;height:26px;background:#2a283c;border-radius:10px"></div>
<div style="left:3px;top:1050px;width:27px;height:26px;background:#2a283c;border-radius:10px"></div>
<svg style="left:13px;top:888px" width="8" height="12"><path d="M0.5 0.5 L7.5 6 L0.5 11.5 Z" fill="#a8b8f8"/></svg>
<svg style="left:9px;top:918px" width="17" height="16"><path d="M3 12 Q4.5 10 4.5 7 Q4.5 3 8 3 Q11.5 3 11.5 7 Q11.5 10 13 12 Z" fill="none" stroke="#e0def4" stroke-width="1.3"/><path d="M6.5 13.5 Q8 15 9.5 13.5" fill="none" stroke="#e0def4" stroke-width="1.2"/><circle cx="14" cy="2.5" r="2" fill="#c0b8f4"/></svg>
<svg style="left:11px;top:953px" width="12" height="19"><rect x="4" y="0.5" width="4" height="2" fill="#e0def4"/><rect x="0.5" y="2.5" width="11" height="15.5" rx="1.5" fill="#e0def4"/><path d="M3.5 7 V9 M8.5 7 V9 M2.5 9 H9.5 L8 12 H4 Z M6 12 V15" stroke="#2a283c" fill="#2a283c" stroke-width="1.2"/></svg>
<svg style="left:8px;top:989px" width="18" height="16"><path d="M1.5 5.5 H4.5 L8.5 2 V14 L4.5 10.5 H1.5 Z" fill="none" stroke="#a8c0f8" stroke-width="1.3"/><path d="M11 5 Q12.5 8 11 11 M13.5 3 Q16.5 8 13.5 13" fill="none" stroke="#e0def4" stroke-width="1.3"/></svg>
<svg style="left:8px;top:1022px" width="17" height="17"><circle cx="8.5" cy="8.5" r="3.3" fill="#f0eef8"/><path d="M8.5 0.5 V3 M8.5 14 V16.5 M0.5 8.5 H3 M14 8.5 H16.5 M2.8 2.8 L4.6 4.6 M12.4 12.4 L14.2 14.2 M2.8 14.2 L4.6 12.4 M12.4 4.6 L14.2 2.8" stroke="#f0eef8" stroke-width="1.3"/></svg>
<svg style="left:10px;top:1055px" width="14" height="17"><path d="M2 1 H12 V6 L9 8 L12 11 V16 L7 13 L2 16 V11 L5 8 L2 6 Z" fill="none" stroke="#f0eef8" stroke-width="1.3"/></svg>
<div style="left:0;top:0;width:12px;height:12px;background:radial-gradient(circle at 12px 12px,transparent 11px,#000 12px)"></div>
<div style="left:1908px;top:0;width:12px;height:12px;background:radial-gradient(circle at 0 12px,transparent 11px,#000 12px)"></div>
<div style="left:1908px;top:1068px;width:12px;height:12px;background:radial-gradient(circle at 0 0,transparent 11px,#000 12px)"></div>
<div style="left:0;top:1068px;width:12px;height:12px;background:radial-gradient(circle at 12px 0,transparent 11px,#000 12px)"></div>
</body></html>
